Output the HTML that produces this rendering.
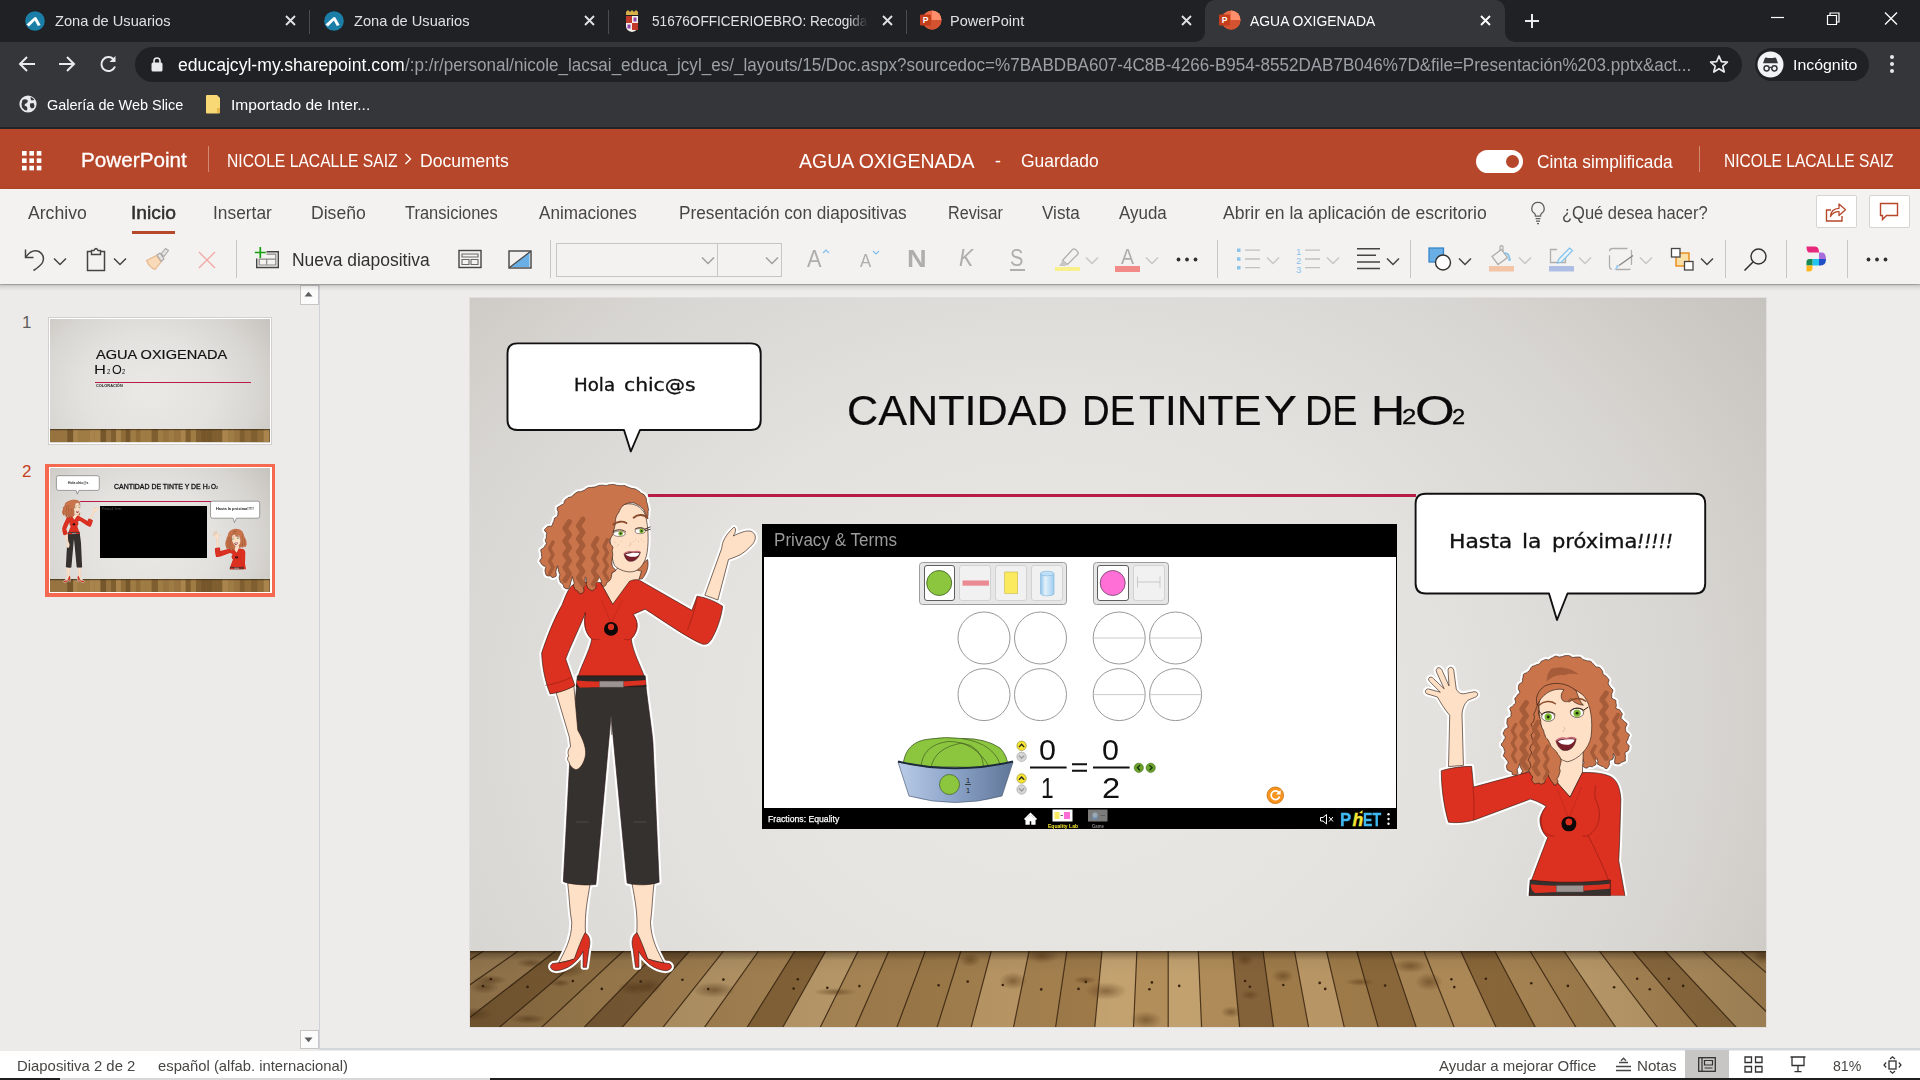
<!DOCTYPE html>
<html lang="es"><head><meta charset="utf-8"><title>AGUA OXIGENADA</title>
<style>
html,body{margin:0;padding:0;}
body{width:1920px;height:1080px;overflow:hidden;position:relative;background:#edebe9;font-family:"Liberation Sans",sans-serif;}
.a{position:absolute;}
.t{position:absolute;white-space:pre;transform-origin:0 50%;}
svg{position:absolute;overflow:visible;}

</style></head>
<body>
<div class="a" style="left:0;top:0;width:1920px;height:42px;background:#202124"></div>
<div class="a" style="left:0;top:42px;width:1920px;height:86px;background:#35363a"></div>
<div class="a" style="left:0;top:127.300px;width:1920px;height:1.700px;background:#222326"></div>
<div class="a" style="left:1205px;top:0;width:300px;height:42px;background:#35363a;border-radius:10px 10px 0 0"></div>
<svg style="left:1195px;top:32px" width="10" height="10"><path d="M10 0 V10 H0 A10 10 0 0 0 10 0Z" fill="#35363a"/></svg>
<svg style="left:1505px;top:32px" width="10" height="10"><path d="M0 0 V10 H10 A10 10 0 0 1 0 0Z" fill="#35363a"/></svg>
<div class="a" style="left:309px;top:10px;width:1px;height:24px;background:#4a4c50"></div>
<div class="a" style="left:608px;top:10px;width:1px;height:24px;background:#4a4c50"></div>
<div class="a" style="left:906px;top:10px;width:1px;height:24px;background:#4a4c50"></div>
<svg style="left:24.5px;top:11px" width="20" height="20" viewBox="0 0 20 20"><circle cx="10" cy="10" r="9.800" fill="#1b7ea6"/><path d="M1.5 13.5 L9.5 6.2 Q10.5 5.4 11.4 6.6 L15.6 14 L12.8 15 L9.8 9.6 L4 15.6Z" fill="#fff"/></svg>
<svg style="left:323.5px;top:11px" width="20" height="20" viewBox="0 0 20 20"><circle cx="10" cy="10" r="9.800" fill="#1b7ea6"/><path d="M1.5 13.5 L9.5 6.2 Q10.5 5.4 11.4 6.6 L15.6 14 L12.8 15 L9.8 9.6 L4 15.6Z" fill="#fff"/></svg>
<svg style="left:624px;top:10px" width="16" height="22" viewBox="0 0 16 22"><path d="M2 2 L4 0 L6 2 L8 0 L10 2 L12 0 L14 2 V5 H2Z" fill="#d8b04a"/><path d="M2 6 H14 V16 Q14 21 8 22 Q2 21 2 16Z" fill="#f4f0ea"/><rect x="2" y="6" width="6" height="7" fill="#c0392b"/><rect x="8" y="13" width="6" height="7" fill="#c0392b"/><rect x="9.5" y="7.5" width="3" height="4" fill="#8e44ad"/><rect x="3.5" y="14.5" width="3" height="4" fill="#8e44ad"/></svg>
<svg style="left:920px;top:10px" width="22" height="20" viewBox="0 0 22 20"><circle cx="12" cy="10" r="9.5" fill="#ed6c47"/><path d="M12 .5 A9.5 9.5 0 0 1 21.5 10 H12Z" fill="#ff8f6b"/><path d="M2.5 10 H21.5 A9.5 9.5 0 0 1 3.8 14.8Z" fill="#d35230"/><rect x="0" y="4.5" width="11" height="11" rx="1" fill="#c43e1c"/><text x="5.5" y="13.2" font-family="Liberation Sans,sans-serif" font-size="8.5" font-weight="700" fill="#fff" text-anchor="middle">P</text></svg>
<svg style="left:1219px;top:10px" width="22" height="20" viewBox="0 0 22 20"><circle cx="12" cy="10" r="9.5" fill="#ed6c47"/><path d="M12 .5 A9.5 9.5 0 0 1 21.5 10 H12Z" fill="#ff8f6b"/><path d="M2.5 10 H21.5 A9.5 9.5 0 0 1 3.8 14.8Z" fill="#d35230"/><rect x="0" y="4.5" width="11" height="11" rx="1" fill="#c43e1c"/><text x="5.5" y="13.2" font-family="Liberation Sans,sans-serif" font-size="8.5" font-weight="700" fill="#fff" text-anchor="middle">P</text></svg>
<span class="t" style="left:55.00px;top:10.5px;line-height:20px;font-size:15px;color:#dee1e6;transform:scaleX(0.9754);">Zona de Usuarios</span>
<span class="t" style="left:354.00px;top:10.5px;line-height:20px;font-size:15px;color:#dee1e6;transform:scaleX(0.9754);">Zona de Usuarios</span>
<span class="t" style="left:652.00px;top:10.5px;line-height:20px;font-size:15px;color:#dee1e6;transform:scaleX(0.9066);-webkit-mask-image:linear-gradient(90deg,#000 91%,transparent 100%);mask-image:linear-gradient(90deg,#000 91%,transparent 100%);">51676OFFICERIOEBRO: Recogida</span>
<span class="t" style="left:950.03px;top:10.5px;line-height:20px;font-size:15px;color:#dee1e6;transform:scaleX(0.9668);">PowerPoint</span>
<span class="t" style="left:1250.00px;top:10.5px;line-height:20px;font-size:15px;color:#fff;transform:scaleX(0.9274);">AGUA OXIGENADA</span>
<svg style="left:284.5px;top:15px" width="11" height="11" viewBox="0 0 11 11"><path d="M1 1 L10 10 M10 1 L1 10" stroke="#dee1e6" stroke-width="1.9" fill="none"/></svg>
<svg style="left:583.5px;top:15px" width="11" height="11" viewBox="0 0 11 11"><path d="M1 1 L10 10 M10 1 L1 10" stroke="#dee1e6" stroke-width="1.9" fill="none"/></svg>
<svg style="left:881.5px;top:15px" width="11" height="11" viewBox="0 0 11 11"><path d="M1 1 L10 10 M10 1 L1 10" stroke="#dee1e6" stroke-width="1.9" fill="none"/></svg>
<svg style="left:1180.5px;top:15px" width="11" height="11" viewBox="0 0 11 11"><path d="M1 1 L10 10 M10 1 L1 10" stroke="#dee1e6" stroke-width="1.9" fill="none"/></svg>
<svg style="left:1479.5px;top:15px" width="11" height="11" viewBox="0 0 11 11"><path d="M1 1 L10 10 M10 1 L1 10" stroke="#fff" stroke-width="1.9" fill="none"/></svg>
<svg style="left:1524px;top:13px" width="16" height="16" viewBox="0 0 16 16"><path d="M8 1 V15 M1 8 H15" stroke="#e8eaed" stroke-width="2" fill="none"/></svg>
<svg style="left:1770px;top:10px" width="140" height="18" viewBox="0 0 140 18"><path d="M1 7.5 H14" stroke="#fff" stroke-width="1.2"/><path d="M57.5 5.5 H66.5 V14.5 H57.5Z M60 5.5 V3 H69 V12 H66.5" stroke="#fff" stroke-width="1.2" fill="none"/><path d="M115 2.5 L127 14.5 M127 2.5 L115 14.5" stroke="#fff" stroke-width="1.3" fill="none"/></svg>
<svg style="left:17px;top:54px" width="104" height="20" viewBox="0 0 104 20"><path d="M18 10 H3 M10 3 L3 10 L10 17" stroke="#e8eaed" stroke-width="2" fill="none"/><path d="M42 10 H57 M50 3 L57 10 L50 17" stroke="#e8eaed" stroke-width="2" fill="none"/><path d="M96.5 5.2 A7 7 0 1 0 98 12.5" stroke="#e8eaed" stroke-width="2" fill="none"/><path d="M98.5 2 V8 H92.5Z" fill="#e8eaed"/></svg>
<div class="a" style="left:135px;top:47px;width:1607px;height:35px;border-radius:18px;background:#202124"></div>
<svg style="left:151px;top:57px" width="12" height="15" viewBox="0 0 12 15"><rect x="0.5" y="5.5" width="11" height="9" rx="1.5" fill="#e8eaed"/><path d="M3 6 V4 A3 3 0 0 1 9 4 V6" stroke="#e8eaed" stroke-width="1.6" fill="none"/></svg>
<span class="t" style="left:178.00px;top:54.2px;line-height:23px;font-size:17.5px;color:#fff;transform:scaleX(1.0056);">educajcyl-my.sharepoint.com</span>
<span class="t" style="left:404.50px;top:54.2px;line-height:23px;font-size:17.5px;color:#9aa0a6;transform:scaleX(0.9744);">/:p:/r/personal/nicole_lacsai_educa_jcyl_es/_layouts/15/Doc.aspx?sourcedoc=%7BABDBA607-4C8B-4266-B954-8552DAB7B046%7D&amp;file=Presentación%203.pptx&amp;act...</span>
<svg style="left:1709px;top:54px" width="20" height="20" viewBox="0 0 20 20"><path d="M10 2 L12.4 7.6 L18.4 8.1 L13.8 12.1 L15.2 18 L10 14.8 L4.8 18 L6.2 12.1 L1.6 8.1 L7.6 7.6Z" stroke="#e8eaed" stroke-width="1.7" fill="none" stroke-linejoin="round"/></svg>
<div class="a" style="left:1755px;top:48px;width:114px;height:33px;border-radius:17px;background:#202124"></div>
<svg style="left:1757px;top:51px" width="27" height="27" viewBox="0 0 27 27"><circle cx="13.5" cy="13.5" r="13" fill="#f1f3f4"/><path d="M6 12.2 H21 L19.2 7.2 Q18.8 6.2 17.8 6.5 L16 7 H11 L9.2 6.5 Q8.2 6.2 7.8 7.2Z" fill="#35363a"/><circle cx="9.6" cy="17.3" r="2.6" stroke="#35363a" stroke-width="1.5" fill="none"/><circle cx="17.4" cy="17.3" r="2.6" stroke="#35363a" stroke-width="1.5" fill="none"/><path d="M12 16.8 Q13.5 15.8 15 16.8" stroke="#35363a" stroke-width="1.3" fill="none"/></svg>
<span class="t" style="left:1792.94px;top:54.5px;line-height:20px;font-size:15px;color:#fff;transform:scaleX(1.0582);">Incógnito</span>
<svg style="left:1889px;top:54px" width="6" height="20" viewBox="0 0 6 20"><circle cx="3" cy="3" r="2" fill="#e8eaed"/><circle cx="3" cy="10" r="2" fill="#e8eaed"/><circle cx="3" cy="17" r="2" fill="#e8eaed"/></svg>
<svg style="left:19px;top:95px" width="18" height="18" viewBox="0 0 18 18"><circle cx="9" cy="9" r="8.6" fill="#e8eaed"/><path d="M3.5 5 Q6 3.5 8.5 5 Q9.5 7 7.5 8.2 Q5.5 8.6 5.5 10.5 L7.6 11.5 Q9 12.8 8 15.4 Q5 15.5 3 12.5 Q1.8 9 3.5 5Z M11 8.4 L14.6 8 Q16.2 10.5 14.6 13 L12.6 13.4 Q10.6 12.4 11 10.6Z M11.8 2 Q14.2 2.8 15.4 5 L12.5 5.4 Q11 4 11.8 2Z" fill="#35363a"/></svg>
<span class="t" style="left:47.00px;top:94.5px;line-height:20px;font-size:15px;color:#fff;transform:scaleX(0.9637);">Galería de Web Slice</span>
<svg style="left:205px;top:95px" width="16" height="19" viewBox="0 0 16 19"><path d="M1 1 Q1 0 2 0 H12 L15 3 V17 Q15 18.5 13.5 18.5 H2 Q1 18.5 1 17.5Z" fill="#f8d775"/><rect x="12" y="13" width="3" height="5" fill="#e8b94a"/></svg>
<span class="t" style="left:230.96px;top:94.5px;line-height:20px;font-size:15px;color:#fff;transform:scaleX(1.0373);">Importado de Inter...</span>
<div class="a" style="left:0;top:129px;width:1920px;height:60px;background:#b7472a"></div>
<svg style="left:21.5px;top:150.5px" width="20" height="20" viewBox="0 0 19 19"><rect x="0" y="0" width="4.4" height="4.4" fill="#fff"/><rect x="0" y="7" width="4.4" height="4.4" fill="#fff"/><rect x="0" y="14" width="4.4" height="4.4" fill="#fff"/><rect x="7" y="0" width="4.4" height="4.4" fill="#fff"/><rect x="7" y="7" width="4.4" height="4.4" fill="#fff"/><rect x="7" y="14" width="4.4" height="4.4" fill="#fff"/><rect x="14" y="0" width="4.4" height="4.4" fill="#fff"/><rect x="14" y="7" width="4.4" height="4.4" fill="#fff"/><rect x="14" y="14" width="4.4" height="4.4" fill="#fff"/></svg>
<span class="t" style="left:81.01px;top:145.5px;line-height:27px;font-size:21px;color:#fff;transform:scaleX(0.9854);-webkit-text-stroke:0.3px #fff;">PowerPoint</span>
<div class="a" style="left:208px;top:146px;width:1px;height:26px;background:#d28a74"></div>
<span class="t" style="left:227.10px;top:149.5px;line-height:23px;font-size:17.5px;color:#fff;transform:scaleX(0.8950);">NICOLE LACALLE SAIZ</span>
<svg style="left:404px;top:153px" width="8" height="12" viewBox="0 0 8 12"><path d="M1.5 1 L6.5 6 L1.5 11" stroke="#fff" stroke-width="1.4" fill="none"/></svg>
<span class="t" style="left:420.00px;top:149.5px;line-height:23px;font-size:17.5px;color:#fff;transform:scaleX(1.0028);">Documents</span>
<span class="t" style="left:799.00px;top:146.5px;line-height:27px;font-size:20.5px;color:#fff;transform:scaleX(0.9516);">AGUA OXIGENADA</span>
<span class="t" style="left:995.00px;top:149.5px;line-height:23px;font-size:17.5px;color:#fff;">-</span>
<span class="t" style="left:1021.00px;top:149.5px;line-height:23px;font-size:17.5px;color:#fff;transform:scaleX(0.9987);">Guardado</span>
<div class="a" style="left:1476px;top:149.5px;width:47px;height:23px;border-radius:12px;background:#fff"></div>
<div class="a" style="left:1506px;top:154.5px;width:13px;height:13px;border-radius:7px;background:#b7472a"></div>
<span class="t" style="left:1537.00px;top:150.5px;line-height:23px;font-size:17.5px;color:#fff;transform:scaleX(0.9898);">Cinta simplificada</span>
<div class="a" style="left:1699px;top:146px;width:1px;height:26px;background:#d28a74"></div>
<span class="t" style="left:1724.11px;top:149.5px;line-height:23px;font-size:17.5px;color:#fff;transform:scaleX(0.8898);">NICOLE LACALLE SAIZ</span>
<div class="a" style="left:0;top:189px;width:1920px;height:95px;background:#f3f2f1;box-shadow:0 2px 5px rgba(0,0,0,.25)"></div>
<span class="t" style="left:28.00px;top:202px;line-height:23px;font-size:17.5px;color:#484644;transform:scaleX(1.0066);">Archivo</span>
<span class="t" style="left:213.01px;top:202px;line-height:23px;font-size:17.5px;color:#484644;transform:scaleX(0.9915);">Insertar</span>
<span class="t" style="left:311.00px;top:202px;line-height:23px;font-size:17.5px;color:#484644;transform:scaleX(1.0049);">Diseño</span>
<span class="t" style="left:405.00px;top:202px;line-height:23px;font-size:17.5px;color:#484644;transform:scaleX(0.9412);">Transiciones</span>
<span class="t" style="left:539.00px;top:202px;line-height:23px;font-size:17.5px;color:#484644;transform:scaleX(0.9757);">Animaciones</span>
<span class="t" style="left:679.02px;top:202px;line-height:23px;font-size:17.5px;color:#484644;transform:scaleX(0.9836);">Presentación con diapositivas</span>
<span class="t" style="left:948.08px;top:202px;line-height:23px;font-size:17.5px;color:#484644;transform:scaleX(0.9232);">Revisar</span>
<span class="t" style="left:1042.00px;top:202px;line-height:23px;font-size:17.5px;color:#484644;transform:scaleX(0.9780);">Vista</span>
<span class="t" style="left:1119.00px;top:202px;line-height:23px;font-size:17.5px;color:#484644;transform:scaleX(0.9683);">Ayuda</span>
<span class="t" style="left:1223.00px;top:202px;line-height:23px;font-size:17.5px;color:#484644;transform:scaleX(1.0042);">Abrir en la aplicación de escritorio</span>
<span class="t" style="left:1562.06px;top:202px;line-height:23px;font-size:17.5px;color:#484644;transform:scaleX(0.9419);">¿Qué desea hacer?</span>
<span class="t" style="left:130.90px;top:202px;line-height:23px;font-size:17.5px;color:#323130;transform:scaleX(1.0992);-webkit-text-stroke:0.5px #323130;">Inicio</span>
<div class="a" style="left:132px;top:230.5px;width:43px;height:3.5px;background:#b7472a"></div>
<svg style="left:1530px;top:201px" width="16" height="24" viewBox="0 0 16 24"><path d="M8 1.5 A6 6 0 0 1 11.3 12.6 Q10.6 13.4 10.6 15.2 H5.4 Q5.4 13.4 4.7 12.6 A6 6 0 0 1 8 1.5Z M5.6 17.6 H10.4 M6 20.2 H10 M7 22.6 H9" stroke="#605e5c" stroke-width="1.25" fill="none"/></svg>
<div class="a" style="left:1815.5px;top:194.5px;width:41px;height:33.5px;background:#fff;border:1px solid #d6d4d2;border-radius:2px;box-sizing:border-box"></div>
<div class="a" style="left:1868.5px;top:194.5px;width:41px;height:33.5px;background:#fff;border:1px solid #d6d4d2;border-radius:2px;box-sizing:border-box"></div>
<svg style="left:1825px;top:202px" width="22" height="20" viewBox="0 0 22 20"><path d="M6 8 H1.5 V19 H17 V14" stroke="#b7472a" stroke-width="1.4" fill="none"/><path d="M5.5 14.5 Q6 6.5 14 6.3 V2 L20.5 7.8 L14 13.6 V9.6 Q8.6 9.2 5.5 14.5Z" stroke="#b7472a" stroke-width="1.3" fill="none" stroke-linejoin="round"/></svg>
<svg style="left:1879px;top:202px" width="20" height="19" viewBox="0 0 20 19"><path d="M1.5 1.5 H18.5 V13.5 H7.5 L3.5 17.5 V13.5 H1.5Z" stroke="#b7472a" stroke-width="1.4" fill="none"/></svg>
<svg style="left:23px;top:247px" width="24" height="26" viewBox="0 0 24 26"><path d="M2.5 2.5 V10.5 H10.5" stroke="#444" stroke-width="1.5" fill="none"/><path d="M3 10 Q8.5 1.5 16 4.5 Q22.5 8.5 19.5 15.5 Q17.5 19 10.5 23.5" stroke="#444" stroke-width="1.5" fill="none"/></svg>
<svg style="left:53px;top:256.5px" width="14" height="9" viewBox="0 0 14 9"><path d="M1 1.5 L7 7.5 L13 1.5" stroke="#444" stroke-width="1.5" fill="none"/></svg>
<svg style="left:86px;top:247px" width="20" height="25" viewBox="0 0 20 25"><path d="M5.5 4.5 H1.5 V23.5 H18.5 V4.5 H14.5" stroke="#444" stroke-width="1.5" fill="none"/><path d="M5.5 7.5 V3.5 H8 Q10 -0.5 12 3.5 H14.5 V7.5Z" stroke="#444" stroke-width="1.4" fill="none"/></svg>
<svg style="left:113px;top:256.5px" width="14" height="9" viewBox="0 0 14 9"><path d="M1 1.5 L7 7.5 L13 1.5" stroke="#444" stroke-width="1.5" fill="none"/></svg>
<svg style="left:145px;top:247px" width="26" height="24" viewBox="0 0 26 24"><path d="M1.5 13.5 L11.5 8.5 L16 15 L10 22.5 Q4 20 1.5 13.5Z" fill="#f8d9b8" stroke="#e5b98e" stroke-width="1.2"/><path d="M12 8 L15 6 L19 12 L16.4 14.5Z M16 7 L20.5 1.5 L23.5 3.5 L19 9.5Z" fill="#e6e4e2" stroke="#aaa8a6" stroke-width="1.1"/></svg>
<svg style="left:198px;top:251px" width="18" height="18" viewBox="0 0 18 18"><path d="M1 1 L17 17 M17 1 L1 17" stroke="#f2a9a6" stroke-width="1.4" fill="none"/></svg>
<div class="a" style="left:236px;top:240px;width:1px;height:38px;background:#c8c6c4"></div>
<svg style="left:254px;top:246px" width="26" height="24" viewBox="0 0 26 24"><path d="M12.500 5.700 H24.300 V21.500 H2.700 V12.500" stroke="#444" stroke-width="1.400" fill="none"/><path d="M12.500 8.200 H21.800 V19 H5.200 V12.500 M5.200 13.200 H21.800 M12.700 13.200 V19" stroke="#8a8886" stroke-width="1.200" fill="none"/><path d="M6.300 1 V12 M0.800 6.500 H11.800" stroke="#13a10e" stroke-width="1.700"/></svg>
<span class="t" style="left:292.00px;top:249px;line-height:23px;font-size:17.5px;color:#323130;transform:scaleX(0.9971);">Nueva diapositiva</span>
<svg style="left:458px;top:249px" width="24" height="20" viewBox="0 0 24 20"><rect x="1" y="1.5" width="22" height="17" stroke="#444" stroke-width="1.4" fill="none"/><path d="M4 5 H20 V8 H4Z M4 10.5 H11 V15.5 H4Z M13 10.5 H20 V15.500 H13Z" stroke="#6b6967" stroke-width="1.1" fill="none"/></svg>
<svg style="left:508px;top:250px" width="24" height="19" viewBox="0 0 24 19"><path d="M21.500 2 V17 H3Z" fill="#69afe5"/><rect x="1" y="1" width="22" height="17" stroke="#444" stroke-width="1.4" fill="none"/><path d="M1.500 17.500 L22.500 1.500" stroke="#444" stroke-width="1.2"/></svg>
<div class="a" style="left:550px;top:240px;width:1px;height:38px;background:#c8c6c4"></div>
<div class="a" style="left:556px;top:242.5px;width:226px;height:34px;border:1px solid #c8c6c4;box-sizing:border-box;background:#f3f2f1"></div>
<div class="a" style="left:717px;top:242.5px;width:1px;height:34px;background:#c8c6c4"></div>
<svg style="left:700.5px;top:255.5px" width="14" height="9" viewBox="0 0 14 9"><path d="M1 1.5 L7 7.5 L13 1.5" stroke="#a19f9d" stroke-width="1.5" fill="none"/></svg>
<svg style="left:764.5px;top:255.5px" width="14" height="9" viewBox="0 0 14 9"><path d="M1 1.5 L7 7.5 L13 1.5" stroke="#a19f9d" stroke-width="1.5" fill="none"/></svg>
<span class="t" style="left:807.00px;top:243.2px;line-height:31px;font-size:24px;color:#b0aeac;transform:scaleX(0.9062);">A</span>
<svg style="left:822px;top:249px" width="8" height="5" viewBox="0 0 8 5"><path d="M1 4 L4 1 L7 4" stroke="#7fc0ea" stroke-width="1.2" fill="none"/></svg>
<span class="t" style="left:860.00px;top:248.3px;line-height:25px;font-size:19px;color:#b0aeac;transform:scaleX(0.8846);">A</span>
<svg style="left:872px;top:249.500px" width="8" height="5" viewBox="0 0 8 5"><path d="M1 1 L4 4 L7 1" stroke="#7fc0ea" stroke-width="1.2" fill="none"/></svg>
<span class="t" style="left:907.37px;top:243px;line-height:31px;font-size:24px;color:#b0aeac;font-weight:700;transform:scaleX(1.1333);">N</span>
<span class="t" style="left:959.00px;top:243px;line-height:31px;font-size:23.5px;color:#b0aeac;transform:scaleX(0.9118);font-style:italic;">K</span>
<span class="t" style="left:1010.14px;top:242.5px;line-height:31px;font-size:23.5px;color:#b0aeac;transform:scaleX(0.8571);">S</span>
<div class="a" style="left:1010px;top:269px;width:15px;height:1.500px;background:#b0aeac"></div>
<svg style="left:1054px;top:246px" width="28" height="28" viewBox="0 0 28 28"><rect x="1" y="21" width="25" height="4" fill="#f8f18b"/><path d="M8.500 14.500 L18.500 3.500 Q20 2.200 21.500 3.500 L23.600 5.600 Q24.800 7 23.500 8.500 L13.500 18.500Z" stroke="#b0aeac" stroke-width="1.3" fill="none"/><path d="M8.500 14.500 L13.500 18.500 L11 20 H5Z" fill="#c8c6c4"/></svg>
<svg style="left:1085px;top:256px" width="14" height="9" viewBox="0 0 14 9"><path d="M1 1.5 L7 7.5 L13 1.5" stroke="#c8c6c4" stroke-width="1.5" fill="none"/></svg>
<span class="t" style="left:1121.00px;top:241.8px;line-height:29px;font-size:22.5px;color:#b0aeac;transform:scaleX(0.8667);">A</span>
<div class="a" style="left:1115px;top:266px;width:25px;height:5.500px;background:#f28b88"></div>
<svg style="left:1145px;top:256px" width="14" height="9" viewBox="0 0 14 9"><path d="M1 1.5 L7 7.5 L13 1.5" stroke="#c8c6c4" stroke-width="1.5" fill="none"/></svg>
<svg style="left:1176px;top:256.500px" width="22" height="5" viewBox="0 0 22 5"><circle cx="2.500" cy="2.500" r="1.900" fill="#323130"/><circle cx="11" cy="2.500" r="1.900" fill="#323130"/><circle cx="19.500" cy="2.500" r="1.900" fill="#323130"/></svg>
<div class="a" style="left:1217px;top:240px;width:1px;height:38px;background:#c8c6c4"></div>
<svg style="left:1236px;top:247px" width="26" height="24" viewBox="0 0 26 24"><path d="M1 1.500 H4.500 V5 H1Z M1 10.200 H4.500 V13.700 H1Z M1 19 H4.500 V22.500 H1Z" fill="#8cc4ec"/><path d="M9 3.200 H24 M9 12 H24 M9 20.700 H24" stroke="#c2c0be" stroke-width="1.300"/></svg>
<svg style="left:1266px;top:256px" width="14" height="9" viewBox="0 0 14 9"><path d="M1 1.5 L7 7.5 L13 1.5" stroke="#c8c6c4" stroke-width="1.5" fill="none"/></svg>
<svg style="left:1296px;top:245px" width="26" height="28" viewBox="0 0 26 28"><text x="0" y="9.500" font-family="Liberation Sans,sans-serif" font-size="9.500" fill="#8cc4ec">1</text><text x="0" y="18.500" font-family="Liberation Sans,sans-serif" font-size="9.500" fill="#8cc4ec">2</text><text x="0" y="27.500" font-family="Liberation Sans,sans-serif" font-size="9.500" fill="#8cc4ec">3</text><path d="M9 5.200 H24 M9 14 H24 M9 22.700 H24" stroke="#c2c0be" stroke-width="1.300"/></svg>
<svg style="left:1326px;top:256px" width="14" height="9" viewBox="0 0 14 9"><path d="M1 1.5 L7 7.5 L13 1.5" stroke="#c8c6c4" stroke-width="1.5" fill="none"/></svg>
<svg style="left:1356px;top:247px" width="26" height="24" viewBox="0 0 26 24"><path d="M1 1.800 H24 M1 8.300 H20 M1 14.900 H24 M1 21.400 H24" stroke="#444" stroke-width="1.500"/></svg>
<svg style="left:1385.5px;top:256.5px" width="14" height="9" viewBox="0 0 14 9"><path d="M1 1.5 L7 7.5 L13 1.5" stroke="#444" stroke-width="1.5" fill="none"/></svg>
<div class="a" style="left:1409.5px;top:240px;width:1px;height:38px;background:#c8c6c4"></div>
<svg style="left:1428px;top:247px" width="26" height="26" viewBox="0 0 26 26"><rect x="1" y="1" width="14.500" height="14" fill="#69afe5" stroke="#2f7fc7" stroke-width="1.200"/><circle cx="15" cy="15.500" r="7.500" fill="#fff" stroke="#323130" stroke-width="1.400"/></svg>
<svg style="left:1457.5px;top:256.5px" width="14" height="9" viewBox="0 0 14 9"><path d="M1 1.5 L7 7.5 L13 1.5" stroke="#444" stroke-width="1.5" fill="none"/></svg>
<svg style="left:1488px;top:245px" width="28" height="28" viewBox="0 0 28 28"><rect x="1" y="21" width="25" height="5.500" fill="#f3c4a5"/><path d="M4 11.500 L13.500 4.500 L19.500 12.500 L10 19.500Z" stroke="#b0aeac" stroke-width="1.300" fill="none"/><path d="M12 6 V1.500 Q13.500 0 15 1.500 V6" stroke="#b0aeac" stroke-width="1.200" fill="none"/><path d="M16 8.500 Q20.500 7 21.500 13" stroke="#7fc0ea" stroke-width="1.500" fill="none"/><path d="M21.500 11 L23 15 Q21.500 17 20 15Z" fill="#7fc0ea"/></svg>
<svg style="left:1518px;top:256px" width="14" height="9" viewBox="0 0 14 9"><path d="M1 1.5 L7 7.5 L13 1.5" stroke="#c8c6c4" stroke-width="1.5" fill="none"/></svg>
<svg style="left:1548px;top:245px" width="28" height="28" viewBox="0 0 28 28"><rect x="1" y="21" width="25" height="5.500" fill="#aebde3"/><path d="M9 4.500 H2.500 V17.500 H17.500 V12" stroke="#b0aeac" stroke-width="1.300" fill="none"/><path d="M10.500 14.500 L21.500 3 L24.500 5.500 L13.500 17 L9.500 18Z" fill="#e9f3fb" stroke="#7fc0ea" stroke-width="1.200"/></svg>
<svg style="left:1578px;top:256px" width="14" height="9" viewBox="0 0 14 9"><path d="M1 1.5 L7 7.5 L13 1.5" stroke="#c8c6c4" stroke-width="1.5" fill="none"/></svg>
<svg style="left:1608px;top:247px" width="28" height="26" viewBox="0 0 28 26"><rect x="1.500" y="1.500" width="22" height="21" rx="3" stroke="#b0aeac" stroke-width="1.300" fill="none" stroke-dasharray="15 4"/><path d="M11 19.500 Q8.500 23.500 5.500 23 Q8 22 8.500 18 Q10.500 17 11 19.500Z" fill="#9fcdef"/><path d="M11 18.500 L25 8.500" stroke="#8a8886" stroke-width="1.500"/></svg>
<svg style="left:1638.5px;top:256px" width="14" height="9" viewBox="0 0 14 9"><path d="M1 1.5 L7 7.5 L13 1.5" stroke="#c8c6c4" stroke-width="1.5" fill="none"/></svg>
<svg style="left:1670px;top:247px" width="26" height="26" viewBox="0 0 26 26"><rect x="6" y="6" width="13" height="13" fill="#fbe0a6" stroke="#e6820a" stroke-width="1.300"/><rect x="1.500" y="1.500" width="8.500" height="8.500" fill="#fff" stroke="#484644" stroke-width="1.300"/><rect x="14.500" y="14.500" width="8.500" height="8.500" fill="#fff" stroke="#484644" stroke-width="1.300"/></svg>
<svg style="left:1699.5px;top:256.5px" width="14" height="9" viewBox="0 0 14 9"><path d="M1 1.5 L7 7.5 L13 1.5" stroke="#444" stroke-width="1.5" fill="none"/></svg>
<div class="a" style="left:1724.5px;top:240px;width:1px;height:38px;background:#c8c6c4"></div>
<svg style="left:1743px;top:247px" width="26" height="26" viewBox="0 0 26 26"><circle cx="15.500" cy="9.500" r="7.500" stroke="#323130" stroke-width="1.400" fill="none"/><path d="M10 15 L1.500 23.500" stroke="#323130" stroke-width="1.600"/></svg>
<div class="a" style="left:1785.5px;top:240px;width:1px;height:38px;background:#c8c6c4"></div>
<svg style="left:1806px;top:246px" width="22" height="27" viewBox="0 0 22 27"><path d="M0.500 0.500 H9 Q13 0.500 13 6.500 H3.500 Q0.500 6.500 0.500 0.500Z" fill="#e8287b"/><path d="M13 6.500 H16 Q20 7 20 13 H13Z" fill="#a86edd"/><path d="M13 13 H20 Q20 19.500 14.500 19.500 H13Z" fill="#1f4fc9"/><rect x="6.500" y="13" width="6.500" height="6.500" fill="#22c5f0"/><path d="M0.500 19.500 V16 Q0.500 13 3.500 13 H6.500 V19.500Z" fill="#178a54"/><path d="M0.500 19.500 H6.500 V22 Q6.500 25.500 3 25.500 H0.500Z" fill="#ffb71b"/></svg>
<div class="a" style="left:1846.5px;top:240px;width:1px;height:38px;background:#c8c6c4"></div>
<svg style="left:1865.500px;top:256.500px" width="22" height="5" viewBox="0 0 22 5"><circle cx="2.500" cy="2.500" r="1.900" fill="#323130"/><circle cx="11" cy="2.500" r="1.900" fill="#323130"/><circle cx="19.500" cy="2.500" r="1.900" fill="#323130"/></svg>
<div class="a" style="left:0;top:285px;width:319px;height:764px;background:#edebe9"></div>
<div class="a" style="left:318.700px;top:285px;width:1px;height:764px;background:#cfd3d9"></div>
<div class="a" style="left:319.700px;top:285px;width:1601px;height:764px;background:#edecea"></div>
<div class="a" style="left:299.500px;top:285.300px;width:19.400px;height:19.400px;background:#fbfbfb;border:1px solid #c8c6c4;box-sizing:border-box"></div>
<svg style="left:304px;top:291px" width="9" height="6" viewBox="0 0 9 6"><path d="M0.500 5.500 L4.500 0.800 L8.500 5.500Z" fill="#605e5c"/></svg>
<div class="a" style="left:299.500px;top:1029.500px;width:19.400px;height:19.400px;background:#fbfbfb;border:1px solid #c8c6c4;box-sizing:border-box"></div>
<svg style="left:304px;top:1037px" width="9" height="6" viewBox="0 0 9 6"><path d="M0.500 0.500 L4.500 5.200 L8.500 0.500Z" fill="#605e5c"/></svg>
<div class="a" style="left:0;top:284px;width:1920px;height:7px;background:linear-gradient(rgba(0,0,0,.2),rgba(0,0,0,.07) 45%,rgba(0,0,0,0))"></div>
<span class="t" style="left:22.00px;top:312px;line-height:22px;font-size:17px;color:#605e5c;">1</span>
<span class="t" style="left:22.00px;top:461px;line-height:22px;font-size:17px;color:#c43e1c;">2</span>
<div class="a" style="left:319px;top:1048px;width:1601px;height:2px;background:#d3d8de"></div>
<div class="a" style="left:0;top:1050.500px;width:1920px;height:28px;background:#fff"></div>
<div class="a" style="left:0;top:1078px;width:1920px;height:2px;background:#1f1f1f"></div>
<div class="a" style="left:60px;top:1078px;width:430px;height:2px;background:#d8d8d8"></div>
<span class="t" style="left:17.01px;top:1055.5px;line-height:20px;font-size:15px;color:#484644;transform:scaleX(0.9924);">Diapositiva 2 de 2</span>
<span class="t" style="left:158.00px;top:1055.5px;line-height:20px;font-size:15px;color:#484644;transform:scaleX(0.9864);">español (alfab. internacional)</span>
<span class="t" style="left:1439.00px;top:1055.5px;line-height:20px;font-size:15px;color:#484644;transform:scaleX(0.9968);">Ayudar a mejorar Office</span>
<svg style="left:1615px;top:1057px" width="17" height="15" viewBox="0 0 17 15"><path d="M1 13.500 H16 M1 9.500 H16 M4 5.500 H13 M6 3.800 L8.500 1.200 L11 3.800" stroke="#484644" stroke-width="1.300" fill="none"/></svg>
<span class="t" style="left:1636.99px;top:1055.5px;line-height:20px;font-size:15px;color:#484644;transform:scaleX(1.0084);">Notas</span>
<div class="a" style="left:1685px;top:1050px;width:44px;height:28px;background:#c8c6c4"></div>
<svg style="left:1698px;top:1057px" width="18" height="15" viewBox="0 0 18 15"><rect x="0.700" y="0.700" width="16.600" height="13.600" stroke="#323130" stroke-width="1.300" fill="none"/><path d="M4 0.700 V14.300 M6.500 3.500 H14.500 V8 H6.500Z M6.500 11 H14.500" stroke="#323130" stroke-width="1.200" fill="none"/></svg>
<svg style="left:1744px;top:1056px" width="19" height="17" viewBox="0 0 19 17"><path d="M1 1 H7.500 V6.500 H1Z M11.500 1 H18 V6.500 H11.500Z M1 10.500 H7.500 V16 H1Z M11.500 10.500 H18 V16 H11.500Z" stroke="#323130" stroke-width="1.300" fill="none"/></svg>
<svg style="left:1790px;top:1056px" width="16" height="17" viewBox="0 0 16 17"><path d="M0.500 1 H15.500 M2 1 V9.500 H14 V1 M8 9.500 V15.500 M4.500 15.700 H11.500" stroke="#323130" stroke-width="1.300" fill="none"/></svg>
<span class="t" style="left:1833.00px;top:1055.5px;line-height:20px;font-size:15px;color:#484644;transform:scaleX(0.9433);">81%</span>
<svg style="left:1883px;top:1056px" width="19" height="18" viewBox="0 0 19 18"><rect x="6" y="5" width="7" height="8" stroke="#323130" stroke-width="1.300" fill="none"/><path d="M7 3 L9.500 0.800 L12 3 M7 15 L9.500 17.200 L12 15 M3.200 6.500 L1 9 L3.200 11.500 M15.800 6.500 L18 9 L15.800 11.500" stroke="#323130" stroke-width="1.200" fill="none"/></svg>
<div class="a" style="left:470px;top:298px;width:1296px;height:729.3px;background:radial-gradient(ellipse 75% 110% at 45% 58%, #ebe9e6 0%, #e4e2df 40%, #d8d6d2 66%, #cecbc6 80%, #c5c3bd 91%, #bebcb5 100%);box-shadow:0 0 0 1px #e1dfdd"></div>
<svg style="left:470px;top:950.5px;overflow:hidden" width="1296" height="76.8" viewBox="0 0 1296 76.8"><defs><linearGradient id="fl" x1="0" x2="1" y1="0" y2="0"><stop offset="0" stop-color="#1a1208" stop-opacity=".27"/><stop offset=".1" stop-color="#1a1208" stop-opacity=".19"/><stop offset=".3" stop-color="#1a1208" stop-opacity=".08"/><stop offset=".5" stop-color="#1a1208" stop-opacity="0"/><stop offset=".8" stop-color="#1a1208" stop-opacity=".04"/><stop offset="1" stop-color="#1a1208" stop-opacity=".2"/></linearGradient><linearGradient id="ft" x1="0" x2="0" y1="0" y2="1"><stop offset="0" stop-color="#1a0f04" stop-opacity=".75"/><stop offset=".035" stop-color="#1a0f04" stop-opacity=".3"/><stop offset=".12" stop-color="#000" stop-opacity=".04"/><stop offset=".3" stop-color="#000" stop-opacity="0"/></linearGradient><radialGradient id="kn"><stop offset="0" stop-color="#5a3a18" stop-opacity=".55"/><stop offset="1" stop-color="#5a3a18" stop-opacity="0"/></radialGradient></defs><rect x="0" y="0" width="1296" height="76.8" fill="#a5814f"/><path d="M-20.0 0 L14.2 0 L-105.3 76.8 L-150.0 76.8Z" fill="#ab8755"/><path d="M13.6 0 L48.7 0 L-60.6 76.8 L-105.9 76.8Z" fill="#bb9866"/><path d="M48.1 0 L86.1 0 L-12.9 76.8 L-61.2 76.8Z" fill="#b4905e"/><path d="M85.5 0 L119.8 0 L29.4 76.8 L-13.5 76.8Z" fill="#8c693b"/><path d="M119.2 0 L153.9 0 L71.7 76.8 L28.8 76.8Z" fill="#a5814f"/><path d="M153.3 0 L188.6 0 L114.2 76.8 L71.1 76.8Z" fill="#b08c59"/><path d="M188.0 0 L220.1 0 L152.3 76.8 L113.6 76.8Z" fill="#85633a"/><path d="M219.5 0 L254.2 0 L193.2 76.8 L151.7 76.8Z" fill="#b08c59"/><path d="M253.6 0 L289.2 0 L234.7 76.8 L192.6 76.8Z" fill="#c3a270"/><path d="M288.6 0 L325.5 0 L277.4 76.8 L234.1 76.8Z" fill="#b08c59"/><path d="M324.9 0 L356.3 0 L313.1 76.8 L276.8 76.8Z" fill="#8c693b"/><path d="M355.7 0 L388.7 0 L350.6 76.8 L312.5 76.8Z" fill="#c3a270"/><path d="M388.1 0 L419.4 0 L385.8 76.8 L350.0 76.8Z" fill="#b08c59"/><path d="M418.8 0 L455.9 0 L427.3 76.8 L385.2 76.8Z" fill="#a5814f"/><path d="M455.3 0 L491.5 0 L467.5 76.8 L426.7 76.8Z" fill="#a07c4a"/><path d="M490.9 0 L521.8 0 L501.6 76.8 L466.9 76.8Z" fill="#a5814f"/><path d="M521.2 0 L559.7 0 L544.0 76.8 L501.0 76.8Z" fill="#bb9866"/><path d="M559.1 0 L597.4 0 L586.1 76.8 L543.4 76.8Z" fill="#a5814f"/><path d="M596.8 0 L632.6 0 L625.3 76.8 L585.5 76.8Z" fill="#9e7a49"/><path d="M632.0 0 L667.5 0 L664.1 76.8 L624.7 76.8Z" fill="#c3a270"/><path d="M666.9 0 L698.8 0 L698.8 76.8 L663.5 76.8Z" fill="#b28e5a"/><path d="M698.2 0 L728.9 0 L732.2 76.8 L698.2 76.8Z" fill="#c3a270"/><path d="M728.3 0 L763.1 0 L770.3 76.8 L731.6 76.8Z" fill="#b08c59"/><path d="M762.5 0 L793.6 0 L804.2 76.8 L769.7 76.8Z" fill="#85633a"/><path d="M793.0 0 L825.1 0 L839.3 76.8 L803.6 76.8Z" fill="#a07c4a"/><path d="M824.5 0 L857.1 0 L875.0 76.8 L838.7 76.8Z" fill="#bb9866"/><path d="M856.5 0 L887.3 0 L909.0 76.8 L874.4 76.8Z" fill="#a07c4a"/><path d="M886.7 0 L921.0 0 L947.0 76.8 L908.4 76.8Z" fill="#8c693b"/><path d="M920.4 0 L954.5 0 L985.0 76.8 L946.4 76.8Z" fill="#ab8755"/><path d="M953.9 0 L991.3 0 L1026.9 76.8 L984.4 76.8Z" fill="#b08c59"/><path d="M990.7 0 L1025.4 0 L1066.2 76.8 L1026.3 76.8Z" fill="#8c693b"/><path d="M1024.8 0 L1060.6 0 L1106.9 76.8 L1065.6 76.8Z" fill="#ab8755"/><path d="M1060.0 0 L1094.6 0 L1146.6 76.8 L1106.3 76.8Z" fill="#a5814f"/><path d="M1094.0 0 L1129.9 0 L1188.3 76.8 L1146.0 76.8Z" fill="#c3a270"/><path d="M1129.3 0 L1163.5 0 L1228.5 76.8 L1187.7 76.8Z" fill="#b08c59"/><path d="M1162.9 0 L1195.7 0 L1267.3 76.8 L1227.9 76.8Z" fill="#957243"/><path d="M1195.1 0 L1233.7 0 L1313.7 76.8 L1266.7 76.8Z" fill="#bb9866"/><path d="M1233.1 0 L1271.7 0 L1360.6 76.8 L1313.1 76.8Z" fill="#b28e5a"/><path d="M1271.1 0 L1308.4 0 L1406.7 76.8 L1360.0 76.8Z" fill="#b08c59"/><ellipse cx="14" cy="36" rx="15" ry="7" fill="url(#kn)"/><ellipse cx="244" cy="39" rx="22" ry="8" fill="url(#kn)"/><ellipse cx="543" cy="30" rx="14" ry="9" fill="url(#kn)"/><ellipse cx="1" cy="63" rx="22" ry="7" fill="url(#kn)"/><ellipse cx="1293" cy="5" rx="11" ry="9" fill="url(#kn)"/><ellipse cx="780" cy="44" rx="9" ry="5" fill="url(#kn)"/><ellipse cx="572" cy="5" rx="17" ry="8" fill="url(#kn)"/><ellipse cx="500" cy="9" rx="11" ry="7" fill="url(#kn)"/><ellipse cx="20" cy="29" rx="17" ry="5" fill="url(#kn)"/><ellipse cx="761" cy="61" rx="10" ry="6" fill="url(#kn)"/><ellipse cx="813" cy="25" rx="11" ry="7" fill="url(#kn)"/><ellipse cx="940" cy="15" rx="17" ry="7" fill="url(#kn)"/><ellipse cx="890" cy="31" rx="15" ry="4" fill="url(#kn)"/><ellipse cx="61" cy="12" rx="15" ry="5" fill="url(#kn)"/><ellipse cx="959" cy="31" rx="14" ry="9" fill="url(#kn)"/><ellipse cx="636" cy="40" rx="21" ry="9" fill="url(#kn)"/><ellipse cx="164" cy="37" rx="17" ry="7" fill="url(#kn)"/><ellipse cx="96" cy="19" rx="21" ry="8" fill="url(#kn)"/><ellipse cx="90" cy="32" rx="11" ry="4" fill="url(#kn)"/><ellipse cx="365" cy="41" rx="22" ry="4" fill="url(#kn)"/><ellipse cx="179" cy="35" rx="13" ry="8" fill="url(#kn)"/><ellipse cx="676" cy="69" rx="16" ry="9" fill="url(#kn)"/><ellipse cx="615" cy="29" rx="12" ry="4" fill="url(#kn)"/><ellipse cx="775" cy="9" rx="9" ry="6" fill="url(#kn)"/><ellipse cx="177" cy="9" rx="14" ry="6" fill="url(#kn)"/><ellipse cx="58" cy="68" rx="18" ry="5" fill="url(#kn)"/><path d="M-20.0 0 L-150.0 76.8M13.6 0 L-105.9 76.8M48.1 0 L-61.2 76.8M85.5 0 L-13.5 76.8M119.2 0 L28.8 76.8M153.3 0 L71.1 76.8M188.0 0 L113.6 76.8M219.5 0 L151.7 76.8M253.6 0 L192.6 76.8M288.6 0 L234.1 76.8M324.9 0 L276.8 76.8M355.7 0 L312.5 76.8M388.1 0 L350.0 76.8M418.8 0 L385.2 76.8M455.3 0 L426.7 76.8M490.9 0 L466.9 76.8M521.2 0 L501.0 76.8M559.1 0 L543.4 76.8M596.8 0 L585.5 76.8M632.0 0 L624.7 76.8M666.9 0 L663.5 76.8M698.2 0 L698.2 76.8M728.3 0 L731.6 76.8M762.5 0 L769.7 76.8M793.0 0 L803.6 76.8M824.5 0 L838.7 76.8M856.5 0 L874.4 76.8M886.7 0 L908.4 76.8M920.4 0 L946.4 76.8M953.9 0 L984.4 76.8M990.7 0 L1026.3 76.8M1024.8 0 L1065.6 76.8M1060.0 0 L1106.3 76.8M1094.0 0 L1146.0 76.8M1129.3 0 L1187.7 76.8M1162.9 0 L1227.9 76.8M1195.1 0 L1266.7 76.8M1233.1 0 L1313.1 76.8M1271.1 0 L1360.0 76.8M1307.8 0 L1406.1 76.8" stroke="#3a2410" stroke-width="1.200" stroke-opacity=".85" fill="none"/><circle cx="-43.7" cy="29.2" r="1.300" fill="#3a2410"/><circle cx="-3.7" cy="27.8" r="1.300" fill="#3a2410"/><circle cx="-31.6" cy="36.8" r="1.300" fill="#3a2410"/><circle cx="20.8" cy="28.0" r="1.300" fill="#3a2410"/><circle cx="12.9" cy="35.0" r="1.300" fill="#3a2410"/><circle cx="57.5" cy="35.9" r="1.300" fill="#3a2410"/><circle cx="102.8" cy="30.0" r="1.300" fill="#3a2410"/><circle cx="131.8" cy="37.9" r="1.300" fill="#3a2410"/><circle cx="170.7" cy="30.5" r="1.300" fill="#3a2410"/><circle cx="212.4" cy="28.8" r="1.300" fill="#3a2410"/><circle cx="253.4" cy="28.6" r="1.300" fill="#3a2410"/><circle cx="238.2" cy="38.0" r="1.300" fill="#3a2410"/><circle cx="327.8" cy="28.2" r="1.300" fill="#3a2410"/><circle cx="323.6" cy="37.6" r="1.300" fill="#3a2410"/><circle cx="357.3" cy="36.7" r="1.300" fill="#3a2410"/><circle cx="389.4" cy="35.1" r="1.300" fill="#3a2410"/><circle cx="468.6" cy="34.3" r="1.300" fill="#3a2410"/><circle cx="497.7" cy="30.6" r="1.300" fill="#3a2410"/><circle cx="532.8" cy="34.0" r="1.300" fill="#3a2410"/><circle cx="571.2" cy="38.4" r="1.300" fill="#3a2410"/><circle cx="615.8" cy="30.9" r="1.300" fill="#3a2410"/><circle cx="608.5" cy="37.9" r="1.300" fill="#3a2410"/><circle cx="681.9" cy="31.4" r="1.300" fill="#3a2410"/><circle cx="679.4" cy="38.3" r="1.300" fill="#3a2410"/><circle cx="709.2" cy="34.9" r="1.300" fill="#3a2410"/><circle cx="775.1" cy="30.0" r="1.300" fill="#3a2410"/><circle cx="779.9" cy="35.7" r="1.300" fill="#3a2410"/><circle cx="813.3" cy="34.0" r="1.300" fill="#3a2410"/><circle cx="849.7" cy="31.9" r="1.300" fill="#3a2410"/><circle cx="855.2" cy="37.9" r="1.300" fill="#3a2410"/><circle cx="915.1" cy="34.5" r="1.300" fill="#3a2410"/><circle cx="981.4" cy="28.3" r="1.300" fill="#3a2410"/><circle cx="984.3" cy="36.1" r="1.300" fill="#3a2410"/><circle cx="1015.9" cy="27.7" r="1.300" fill="#3a2410"/><circle cx="1061.3" cy="32.2" r="1.300" fill="#3a2410"/><circle cx="1097.9" cy="34.9" r="1.300" fill="#3a2410"/><circle cx="1144.1" cy="36.2" r="1.300" fill="#3a2410"/><circle cx="1167.2" cy="27.8" r="1.300" fill="#3a2410"/><circle cx="1179.8" cy="38.3" r="1.300" fill="#3a2410"/><circle cx="1198.9" cy="27.7" r="1.300" fill="#3a2410"/><circle cx="1213.2" cy="34.9" r="1.300" fill="#3a2410"/><circle cx="1297.8" cy="36.6" r="1.300" fill="#3a2410"/><circle cx="1332.0" cy="30.1" r="1.300" fill="#3a2410"/><circle cx="1329.0" cy="36.3" r="1.300" fill="#3a2410"/><rect x="0" y="0" width="1296" height="76.8" fill="url(#fl)"/><rect x="0" y="0" width="1296" height="76.8" fill="url(#ft)"/></svg>
<span class="t" style="left:847.29px;top:386.2px;line-height:48px;font-size:43px;color:#0a0a0a;transform:scaleX(1.0045);-webkit-text-stroke:0.2px #0a0a0a;">CANTIDAD</span>
<span class="t" style="left:1081.92px;top:386.2px;line-height:48px;font-size:43px;color:#0a0a0a;transform:scaleX(0.8919);-webkit-text-stroke:0.2px #0a0a0a;">DE</span>
<span class="t" style="left:1139.00px;top:386.2px;line-height:48px;font-size:43px;color:#0a0a0a;transform:scaleX(0.9875);-webkit-text-stroke:0.2px #0a0a0a;">TINTE</span>
<span class="t" style="left:1264.30px;top:386.2px;line-height:48px;font-size:43px;color:#0a0a0a;transform:scaleX(1.1500);-webkit-text-stroke:0.2px #0a0a0a;">Y</span>
<span class="t" style="left:1305.36px;top:386.2px;line-height:48px;font-size:43px;color:#0a0a0a;transform:scaleX(0.8791);-webkit-text-stroke:0.2px #0a0a0a;">DE</span>
<span class="t" style="left:1370.71px;top:386.2px;line-height:48px;font-size:43px;color:#0a0a0a;transform:scaleX(1.0960);-webkit-text-stroke:0.2px #0a0a0a;">H</span>
<span class="t" style="left:1414.93px;top:386.2px;line-height:48px;font-size:43px;color:#0a0a0a;transform:scaleX(1.1867);-webkit-text-stroke:0.2px #0a0a0a;">O</span>
<span class="t" style="left:1402.30px;top:404.7px;line-height:24px;font-size:21.5px;color:#0a0a0a;transform:scaleX(1.2000);-webkit-text-stroke:0.3px #0a0a0a;">2</span>
<span class="t" style="left:1452.40px;top:404.7px;line-height:24px;font-size:21.5px;color:#0a0a0a;transform:scaleX(1.1000);-webkit-text-stroke:0.3px #0a0a0a;">2</span>
<div class="a" style="left:648px;top:493.500px;width:768px;height:3px;background:#b71c46"></div>
<svg style="left:0;top:0" width="1920" height="1080"><path d="M517.5 343.4 H750.7 Q760.7 343.4 760.7 353.4 V420 Q760.7 430 750.7 430 H640 L630.8 451.5 L624 430 H517.5 Q507.5 430 507.5 420 V353.4 Q507.5 343.4 517.5 343.4Z" fill="#fff" stroke="#111" stroke-width="1.900" stroke-linejoin="round"/></svg>
<span class="t" style="left:573.69px;top:373.8px;line-height:22px;font-size:18px;color:#111;transform:scaleX(1.0117);font-family:'DejaVu Sans','Liberation Sans',sans-serif;-webkit-text-stroke:0.35px #111;">Hola</span>
<span class="t" style="left:623.57px;top:373.8px;line-height:22px;font-size:18px;color:#111;transform:scaleX(1.1254);font-family:'DejaVu Sans','Liberation Sans',sans-serif;-webkit-text-stroke:0.35px #111;">chic@s</span>
<svg style="left:0;top:0" width="1920" height="1080"><path d="M1425.6 493.7 H1695.2 Q1705.2 493.7 1705.2 503.7 V583.5 Q1705.2 593.5 1695.2 593.5 H1567.5 L1557 620 L1549 593.5 H1425.6 Q1415.6 593.5 1415.6 583.5 V503.7 Q1415.6 493.7 1425.6 493.7Z" fill="#fff" stroke="#111" stroke-width="1.900" stroke-linejoin="round"/></svg>
<span class="t" style="left:1448.51px;top:529.3px;line-height:24px;font-size:20px;color:#111;transform:scaleX(1.0944);font-family:'DejaVu Sans','Liberation Sans',sans-serif;-webkit-text-stroke:0.35px #111;">Hasta</span>
<span class="t" style="left:1522.21px;top:529.3px;line-height:24px;font-size:20px;color:#111;transform:scaleX(1.0928);font-family:'DejaVu Sans','Liberation Sans',sans-serif;-webkit-text-stroke:0.35px #111;">la</span>
<span class="t" style="left:1551.65px;top:529.3px;line-height:24px;font-size:20px;color:#111;transform:scaleX(1.0510);font-family:'DejaVu Sans','Liberation Sans',sans-serif;-webkit-text-stroke:0.35px #111;">próxima</span>
<span class="t" style="left:1636.61px;top:529.3px;line-height:24px;font-size:20px;color:#111;transform:scaleX(0.8931);font-family:'DejaVu Sans','Liberation Sans',sans-serif;font-style:italic;-webkit-text-stroke:0.35px #111;">!!!!!</span>
<div class="a" style="left:762px;top:524px;width:635px;height:304.500px;background:#000"></div>
<div class="a" style="left:763.500px;top:556.500px;width:632.500px;height:251.700px;background:#fff"></div>
<span class="t" style="left:773.53px;top:528.7px;line-height:23px;font-size:17.5px;color:#9b9b9b;transform:scaleX(0.9749);">Privacy &amp; Terms</span>
<div class="a" style="left:919px;top:561.500px;width:147.6px;height:43px;background:#e6e6e6;border:1px solid #9c9c9c;border-radius:3.500px;box-sizing:border-box"></div>
<div class="a" style="left:923.5px;top:565px;width:31.500px;height:36px;background:#fff;border:1.300px solid #5e5e5e;border-radius:3px;box-sizing:border-box"></div>
<div class="a" style="left:959.4px;top:565px;width:31.500px;height:36px;background:#f1f1f1;border:1px solid #d2d2d2;border-radius:3px;box-sizing:border-box"></div>
<div class="a" style="left:995.2px;top:565px;width:31.500px;height:36px;background:#f1f1f1;border:1px solid #d2d2d2;border-radius:3px;box-sizing:border-box"></div>
<div class="a" style="left:1031px;top:565px;width:31.500px;height:36px;background:#f1f1f1;border:1px solid #d2d2d2;border-radius:3px;box-sizing:border-box"></div>
<div class="a" style="left:1093px;top:561.500px;width:75.7px;height:43px;background:#e6e6e6;border:1px solid #9c9c9c;border-radius:3.500px;box-sizing:border-box"></div>
<div class="a" style="left:1097px;top:565px;width:31.500px;height:36px;background:#fff;border:1.300px solid #5e5e5e;border-radius:3px;box-sizing:border-box"></div>
<div class="a" style="left:1133px;top:565px;width:31.500px;height:36px;background:#f1f1f1;border:1px solid #d2d2d2;border-radius:3px;box-sizing:border-box"></div>
<svg style="left:0;top:0" width="1920" height="1080"><defs><linearGradient id="cy" x1="0" x2="1"><stop offset="0" stop-color="#8fc4ea"/><stop offset=".35" stop-color="#e3f1fb"/><stop offset="1" stop-color="#9fcdef"/></linearGradient><linearGradient id="bk" x1="0" x2="1"><stop offset="0" stop-color="#b9cbe6"/><stop offset=".45" stop-color="#8fa7cc"/><stop offset="1" stop-color="#5f7698"/></linearGradient></defs><circle cx="939.200" cy="583" r="12.500" fill="#8cc63f" stroke="#4a6a28" stroke-width=".900"/><rect x="962.500" y="580.500" width="26.500" height="5.200" fill="#ea8a93"/><rect x="1004.700" y="572" width="13" height="21.500" fill="#fbe95e" stroke="#c9b74a" stroke-width=".600"/><path d="M1040.500 573.500 V593.500 A6.700 2.300 0 0 0 1054 593.500 V573.500Z" fill="url(#cy)" stroke="#7db1dc" stroke-width=".600"/><ellipse cx="1047.250" cy="573.500" rx="6.750" ry="2.300" fill="#bfe0f6" stroke="#7db1dc" stroke-width=".600"/><circle cx="1112.700" cy="583" r="12.500" fill="#ff6fd6" stroke="#7a4a70" stroke-width=".900"/><path d="M1137.500 582 H1160 M1137.500 576.500 V587.500 M1160 576.500 V587.500" stroke="#c9c9c9" stroke-width="1" fill="none"/>
<circle cx="984" cy="638" r="26" fill="#fff" stroke="#8c8c8c" stroke-width=".900"/>
<circle cx="984" cy="694.6" r="26" fill="#fff" stroke="#8c8c8c" stroke-width=".900"/>
<circle cx="1040.5" cy="638" r="26" fill="#fff" stroke="#8c8c8c" stroke-width=".900"/>
<circle cx="1040.5" cy="694.6" r="26" fill="#fff" stroke="#8c8c8c" stroke-width=".900"/>
<circle cx="1119.2" cy="638" r="26" fill="#fff" stroke="#8c8c8c" stroke-width=".900"/><path d="M1093.2 638 H1145.2" stroke="#c4c4c4" stroke-width=".900"/>
<circle cx="1119.2" cy="694.6" r="26" fill="#fff" stroke="#8c8c8c" stroke-width=".900"/><path d="M1093.2 694.6 H1145.2" stroke="#c4c4c4" stroke-width=".900"/>
<circle cx="1175.6" cy="638" r="26" fill="#fff" stroke="#8c8c8c" stroke-width=".900"/><path d="M1149.6 638 H1201.6" stroke="#c4c4c4" stroke-width=".900"/>
<circle cx="1175.6" cy="694.6" r="26" fill="#fff" stroke="#8c8c8c" stroke-width=".900"/><path d="M1149.6 694.6 H1201.6" stroke="#c4c4c4" stroke-width=".900"/>
<path d="M903 766 Q905 741 930 739 Q945 736.500 962 738.500 Q985 738 1000 748 Q1008 756 1008 768Z" fill="#8cc63f" stroke="#3f5c22" stroke-width=".800"/><path d="M921 768 Q922 745 948 741.500 M931 768 Q934 748 962 743 Q982 746 984 768 M948 741.500 Q975 741 990 768 M962 738.500 Q996 744 1001 768" stroke="#3f5c22" stroke-width=".700" fill="none"/><path d="M898 762 Q955 775 1013 762 L1002 796 Q955 809 909 796Z" fill="url(#bk)" stroke="#50607a" stroke-width=".700"/><path d="M898 761.500 Q955 775 1013 761.500" stroke="#1d2a3a" stroke-width="2" fill="none"/><circle cx="949.500" cy="784.500" r="10" fill="#8cc63f" stroke="#3f5c22" stroke-width=".700"/><path d="M965 784.500 H971" stroke="#222" stroke-width=".800"/><text x="968" y="782.500" font-family="Liberation Sans,sans-serif" font-size="7.500" fill="#222" text-anchor="middle">1</text><text x="968" y="792.500" font-family="Liberation Sans,sans-serif" font-size="7.500" fill="#222" text-anchor="middle">1</text>
<circle cx="1021.600" cy="745.8" r="4.700" fill="#f6e633" stroke="#8a7f20" stroke-width=".600"/><path d="M1019 747.1 L1021.600 744.3 L1024.200 747.1" stroke="#222" stroke-width="1.300" fill="none"/>
<circle cx="1021.600" cy="756.8" r="4.700" fill="#d6d6d6" stroke="#9a9a9a" stroke-width=".600"/><path d="M1019 755.6 L1021.600 758.3 L1024.200 755.6" stroke="#9a9a9a" stroke-width="1.300" fill="none"/>
<circle cx="1021.600" cy="778.5" r="4.700" fill="#f6e633" stroke="#8a7f20" stroke-width=".600"/><path d="M1019 779.8 L1021.600 777 L1024.200 779.8" stroke="#222" stroke-width="1.300" fill="none"/>
<circle cx="1021.600" cy="789.5" r="4.700" fill="#d6d6d6" stroke="#9a9a9a" stroke-width=".600"/><path d="M1019 788.3 L1021.600 791 L1024.200 788.3" stroke="#9a9a9a" stroke-width="1.300" fill="none"/>
<path d="M1030 767.500 H1066.600 M1093 767.500 H1129.600" stroke="#111" stroke-width="1.800"/><path d="M1072 764.300 H1087 M1072 770.800 H1087" stroke="#111" stroke-width="2"/><circle cx="1138.800" cy="767.800" r="4.600" fill="#6aa329" stroke="#3f6a15" stroke-width=".600"/><path d="M1140 765.300 L1137.400 767.800 L1140 770.300" stroke="#16300a" stroke-width="1.300" fill="none"/><circle cx="1150.700" cy="767.800" r="4.600" fill="#6aa329" stroke="#3f6a15" stroke-width=".600"/><path d="M1149.500 765.300 L1152.100 767.800 L1149.500 770.300" stroke="#16300a" stroke-width="1.300" fill="none"/><circle cx="1275.300" cy="795.300" r="8.300" fill="#f7941d" stroke="#c9700f" stroke-width=".800"/><path d="M1278.800 792.500 A4.300 4.300 0 1 0 1279.600 796.500" stroke="#fff" stroke-width="1.700" fill="none"/><path d="M1280.600 790 V794.600 H1276Z" fill="#fff"/>
<path d="M1024.500 819.500 L1030.500 813.500 L1036.500 819.500 M1026.200 818.500 V824 H1029 V820.500 H1032 V824 H1034.800 V818.500" stroke="#fff" stroke-width="1.500" fill="none"/><path d="M1026.200 818.500 L1030.500 814.500 L1034.800 818.500 V824 H1032 V820.500 H1029 V824 H1026.200Z" fill="#fff"/><rect x="1052.500" y="809.500" width="20" height="12" fill="#fff"/><rect x="1054.500" y="812" width="5" height="7" fill="#fbe95e"/><rect x="1064" y="812" width="6" height="7" fill="#ff6fd6"/><path d="M1060.500 815.500 H1063" stroke="#444" stroke-width=".800"/><rect x="1088" y="809.500" width="19.500" height="12" fill="#7c7c7c"/><path d="M1091 817 Q1095 822 1099 817Z" fill="#6d8fb5"/><circle cx="1095" cy="815" r="2.500" fill="#9ab"/><path d="M1100.500 815.500 H1105" stroke="#555" stroke-width=".800"/><path d="M1320.500 817.500 H1323 L1326.500 814.500 V824 L1323 821 H1320.500Z" stroke="#fff" stroke-width="1" fill="none"/><path d="M1329 817 L1333 821.500 M1333 817 L1329 821.500" stroke="#fff" stroke-width="1"/><circle cx="1388.500" cy="814.300" r="1.200" fill="#fff"/><circle cx="1388.500" cy="819" r="1.200" fill="#fff"/><circle cx="1388.500" cy="823.700" r="1.200" fill="#fff"/><path d="M1359 813 L1362.500 810 L1362.500 813.500Z" fill="#f6e633"/>
</svg>
<span class="t" style="left:1039.27px;top:733.5px;line-height:32px;font-size:29.5px;color:#111;transform:scaleX(1.0333);">0</span>
<span class="t" style="left:1040.96px;top:771.5px;line-height:32px;font-size:29.5px;color:#111;transform:scaleX(0.7692);">1</span>
<span class="t" style="left:1102.27px;top:733.5px;line-height:32px;font-size:29.5px;color:#111;transform:scaleX(1.0333);">0</span>
<span class="t" style="left:1102.19px;top:771.5px;line-height:32px;font-size:29.5px;color:#111;transform:scaleX(1.1071);">2</span>
<span class="t" style="left:768.20px;top:812.8px;line-height:12px;font-size:9.5px;color:#fff;transform:scaleX(0.9121);-webkit-text-stroke:0.25px #fff;">Fractions: Equality</span>
<span class="t" style="left:1047.50px;top:823px;line-height:6px;font-size:5px;color:#f6e633;font-weight:700;transform:scaleX(1.0110);">Equality Lab</span>
<span class="t" style="left:1091.50px;top:823px;line-height:6px;font-size:5px;color:#8a8a8a;font-weight:700;transform:scaleX(0.8501);">Game</span>
<span class="t" style="left:1340.05px;top:810.8px;line-height:18px;font-size:17.5px;color:#3fb8f0;font-weight:700;transform:scaleX(0.9545);-webkit-text-stroke:0.4px #3fb8f0;">P</span>
<span class="t" style="left:1352.50px;top:810.8px;line-height:18px;font-size:17.5px;color:#f6e633;font-weight:700;transform:scaleX(1.0000);font-style:italic;-webkit-text-stroke:0.4px #f6e633;">h</span>
<span class="t" style="left:1363.19px;top:810.8px;line-height:18px;font-size:17.5px;color:#3fb8f0;font-weight:700;transform:scaleX(0.8075);-webkit-text-stroke:0.4px #3fb8f0;">ET</span>
<svg style="left:0;top:0" width="0" height="0"><defs><clipPath id="clR"><rect x="-50" y="-50" width="1200" height="1092"/></clipPath><g id="chL"><g fill="#fff" stroke="#fff" stroke-width="20" stroke-linejoin="round"><path d="M500 395 L530 372 C536 398 528 428 508 452 L440 458 L425 425Z"/><path d="M768 520 L838 325 C840 298 852 272 888 238 C900 238 896 262 886 274 C910 262 938 250 958 254 C980 262 984 284 968 306 C946 330 925 350 898 360 L866 372 L822 540Z"/><path d="M198 1715 L292 1715 C280 1790 268 1840 272 1925 L228 2032 L160 2048 C185 2000 215 1950 215 1880 C205 1820 205 1770 198 1715Z"/><path d="M465 1715 L557 1715 C550 1770 550 1820 542 1880 C545 1950 572 2000 598 2048 L530 2032 L485 1925 C490 1840 478 1790 465 1715Z"/><path d="M270 1922 C292 1935 294 1962 286 1992 L276 2066 L262 2066 L262 2000 C240 2042 200 2076 150 2080 C122 2076 122 2058 136 2050 C165 2047 200 2042 226 2030 C240 1990 255 1950 270 1922Z"/><path d="M486 1922 C464 1935 462 1962 470 1992 L480 2066 L494 2066 L494 2000 C516 2042 556 2076 606 2080 C634 2076 634 2058 620 2050 C591 2047 556 2042 530 2030 C516 1990 501 1950 486 1922Z"/><path d="M236 890 L522 890 C535 1000 548 1080 552 1130 L578 1712 C540 1726 480 1726 445 1716 L385 1090 L378 1020 L372 1090 L315 1722 C270 1726 215 1722 180 1710 L205 1240 C215 1130 225 1000 236 890Z"/><path d="M150 925 L224 898 L240 1080 C262 1120 280 1160 270 1195 C262 1225 245 1245 232 1245 C215 1240 205 1225 203 1212 C195 1205 196 1192 203 1188 C196 1175 200 1160 210 1150 L205 1110Z"/><path d="M415 400 L505 420 L470 530 L385 562 L335 470Z"/><path d="M335 468 L385 558 L455 462 C480 452 492 455 500 460 L714 583 L736 524 C775 530 810 545 842 566 C835 620 815 670 796 702 C785 722 770 728 755 722 C700 700 600 630 520 578 L470 600 C492 630 495 665 462 702 C470 760 500 810 518 862 L240 862 C255 810 290 750 298 702 C272 680 262 640 272 592 C250 650 210 730 190 785 L228 895 C195 915 160 925 125 930 C105 880 92 820 90 760 C110 700 140 620 175 560 C190 520 200 495 218 478 C255 465 300 462 335 468Z"/><path d="M238 855 L520 855 L524 900 L234 900Z"/><path d="M420 148 C462 128 510 150 522 192 C532 232 536 292 528 342 C522 382 502 410 478 420 C450 430 410 416 392 396 C376 350 370 300 378 258 C384 218 396 174 420 148Z"/><path d="M529 198 L530 196 L531 192 L532 186 L532 179 L532 172 L534 164 L532 156 L531 150 L530 144 L528 138 L526 132 L525 126 L525 119 L522 113 L519 108 L516 103 L511 100 L505 97 L500 94 L496 89 L490 86 L485 82 L479 79 L472 77 L466 77 L460 75 L455 73 L449 71 L443 69 L437 65 L431 64 L424 65 L418 65 L412 64 L406 64 L400 63 L394 61 L388 60 L382 60 L376 61 L370 61 L364 63 L358 65 L352 64 L346 63 L340 63 L334 63 L328 64 L322 66 L316 69 L310 71 L304 71 L298 72 L292 73 L286 73 L280 75 L274 79 L269 83 L263 85 L258 88 L252 90 L245 90 L238 91 L233 95 L227 99 L222 103 L218 108 L212 112 L205 113 L199 115 L194 120 L188 124 L184 130 L183 138 L178 143 L171 145 L167 149 L161 152 L155 155 L154 164 L158 172 L158 179 L157 186 L156 192 L149 197 L143 200 L142 206 L140 214 L137 219 L135 226 L133 232 L126 234 L116 234 L111 238 L107 243 L102 247 L103 254 L109 258 L111 263 L109 271 L110 279 L108 285 L105 289 L106 295 L110 305 L107 311 L102 317 L99 323 L92 327 L86 331 L87 339 L89 347 L89 353 L90 359 L91 365 L85 371 L82 379 L86 385 L90 391 L95 397 L104 400 L107 405 L104 414 L104 421 L106 428 L107 434 L111 439 L118 440 L128 440 L132 446 L137 447 L142 445 L150 441 L151 433 L149 425 L150 416 L153 407 L155 399 L157 398 L157 401 L157 406 L159 412 L160 420 L163 428 L166 435 L163 444 L163 451 L165 457 L167 465 L173 471 L179 475 L181 481 L182 487 L185 490 L191 493 L200 494 L206 487 L208 479 L210 474 L211 466 L214 457 L216 449 L217 444 L217 443 L218 444 L219 448 L221 455 L223 462 L225 470 L222 478 L224 485 L226 491 L230 498 L238 502 L243 506 L245 511 L248 514 L253 514 L259 511 L266 505 L265 495 L264 489 L266 482 L267 474 L270 465 L271 458 L271 451 L271 446 L272 444 L274 446 L275 451 L277 458 L276 468 L275 477 L279 485 L281 491 L289 496 L294 499 L298 502 L303 501 L309 496 L315 490 L316 480 L314 474 L316 467 L319 459 L321 452 L324 445 L325 441 L325 439 L327 440 L330 446 L335 454 L338 463 L337 471 L339 479 L346 483 L352 483 L356 479 L359 472 L363 465 L371 461 L375 456 L378 449 L380 442 L381 435 L382 428 L385 424 L394 421 L398 418 L396 415 L393 411 L388 406 L384 400 L382 392 L382 387 L382 381 L382 375 L383 368 L384 361 L385 354 L385 347 L384 341 L383 335 L384 330 L386 321 L382 315 L378 310 L375 305 L372 298 L371 292 L374 287 L378 281 L381 275 L385 270 L389 263 L389 256 L389 250 L391 245 L393 238 L394 231 L396 225 L396 219 L396 213 L397 205 L398 200 L400 194 L403 187 L407 181 L411 175 L414 168 L417 162 L420 157 L424 151 L428 148 L433 144 L439 141 L445 139 L452 137 L458 137 L464 136 L470 136 L476 138 L482 141 L488 144 L494 147 L500 151 L505 156 L510 160 L514 165 L517 172 L521 180 L523 187 L525 193 L527 197Z"/></g><g stroke="#2a1812" stroke-width="2.600" stroke-linejoin="round"><path d="M500 395 L530 372 C536 398 528 428 508 452 L440 458 L425 425Z" fill="#c9744b"/><path d="M768 520 L838 325 C840 298 852 272 888 238 C900 238 896 262 886 274 C910 262 938 250 958 254 C980 262 984 284 968 306 C946 330 925 350 898 360 L866 372 L822 540Z" fill="#fde0c6"/><path d="M198 1715 L292 1715 C280 1790 268 1840 272 1925 L228 2032 L160 2048 C185 2000 215 1950 215 1880 C205 1820 205 1770 198 1715Z" fill="#fde0c6"/><path d="M465 1715 L557 1715 C550 1770 550 1820 542 1880 C545 1950 572 2000 598 2048 L530 2032 L485 1925 C490 1840 478 1790 465 1715Z" fill="#fde0c6"/><path d="M270 1922 C292 1935 294 1962 286 1992 L276 2066 L262 2066 L262 2000 C240 2042 200 2076 150 2080 C122 2076 122 2058 136 2050 C165 2047 200 2042 226 2030 C240 1990 255 1950 270 1922Z" fill="#dc3020"/><path d="M486 1922 C464 1935 462 1962 470 1992 L480 2066 L494 2066 L494 2000 C516 2042 556 2076 606 2080 C634 2076 634 2058 620 2050 C591 2047 556 2042 530 2030 C516 1990 501 1950 486 1922Z" fill="#dc3020"/><path d="M236 890 L522 890 C535 1000 548 1080 552 1130 L578 1712 C540 1726 480 1726 445 1716 L385 1090 L378 1020 L372 1090 L315 1722 C270 1726 215 1722 180 1710 L205 1240 C215 1130 225 1000 236 890Z" fill="#35312f"/><path d="M150 925 L224 898 L240 1080 C262 1120 280 1160 270 1195 C262 1225 245 1245 232 1245 C215 1240 205 1225 203 1212 C195 1205 196 1192 203 1188 C196 1175 200 1160 210 1150 L205 1110Z" fill="#fde0c6"/><path d="M415 400 L505 420 L470 530 L385 562 L335 470Z" fill="#fde0c6"/><path d="M335 468 L385 558 L455 462 C480 452 492 455 500 460 L714 583 L736 524 C775 530 810 545 842 566 C835 620 815 670 796 702 C785 722 770 728 755 722 C700 700 600 630 520 578 L470 600 C492 630 495 665 462 702 C470 760 500 810 518 862 L240 862 C255 810 290 750 298 702 C272 680 262 640 272 592 C250 650 210 730 190 785 L228 895 C195 915 160 925 125 930 C105 880 92 820 90 760 C110 700 140 620 175 560 C190 520 200 495 218 478 C255 465 300 462 335 468Z" fill="#dc3020"/><path d="M238 855 L520 855 L524 900 L234 900Z" fill="#2b2727"/><path d="M420 148 C462 128 510 150 522 192 C532 232 536 292 528 342 C522 382 502 410 478 420 C450 430 410 416 392 396 C376 350 370 300 378 258 C384 218 396 174 420 148Z" fill="#fde0c6"/><path d="M529 198 L530 196 L531 192 L532 186 L532 179 L532 172 L534 164 L532 156 L531 150 L530 144 L528 138 L526 132 L525 126 L525 119 L522 113 L519 108 L516 103 L511 100 L505 97 L500 94 L496 89 L490 86 L485 82 L479 79 L472 77 L466 77 L460 75 L455 73 L449 71 L443 69 L437 65 L431 64 L424 65 L418 65 L412 64 L406 64 L400 63 L394 61 L388 60 L382 60 L376 61 L370 61 L364 63 L358 65 L352 64 L346 63 L340 63 L334 63 L328 64 L322 66 L316 69 L310 71 L304 71 L298 72 L292 73 L286 73 L280 75 L274 79 L269 83 L263 85 L258 88 L252 90 L245 90 L238 91 L233 95 L227 99 L222 103 L218 108 L212 112 L205 113 L199 115 L194 120 L188 124 L184 130 L183 138 L178 143 L171 145 L167 149 L161 152 L155 155 L154 164 L158 172 L158 179 L157 186 L156 192 L149 197 L143 200 L142 206 L140 214 L137 219 L135 226 L133 232 L126 234 L116 234 L111 238 L107 243 L102 247 L103 254 L109 258 L111 263 L109 271 L110 279 L108 285 L105 289 L106 295 L110 305 L107 311 L102 317 L99 323 L92 327 L86 331 L87 339 L89 347 L89 353 L90 359 L91 365 L85 371 L82 379 L86 385 L90 391 L95 397 L104 400 L107 405 L104 414 L104 421 L106 428 L107 434 L111 439 L118 440 L128 440 L132 446 L137 447 L142 445 L150 441 L151 433 L149 425 L150 416 L153 407 L155 399 L157 398 L157 401 L157 406 L159 412 L160 420 L163 428 L166 435 L163 444 L163 451 L165 457 L167 465 L173 471 L179 475 L181 481 L182 487 L185 490 L191 493 L200 494 L206 487 L208 479 L210 474 L211 466 L214 457 L216 449 L217 444 L217 443 L218 444 L219 448 L221 455 L223 462 L225 470 L222 478 L224 485 L226 491 L230 498 L238 502 L243 506 L245 511 L248 514 L253 514 L259 511 L266 505 L265 495 L264 489 L266 482 L267 474 L270 465 L271 458 L271 451 L271 446 L272 444 L274 446 L275 451 L277 458 L276 468 L275 477 L279 485 L281 491 L289 496 L294 499 L298 502 L303 501 L309 496 L315 490 L316 480 L314 474 L316 467 L319 459 L321 452 L324 445 L325 441 L325 439 L327 440 L330 446 L335 454 L338 463 L337 471 L339 479 L346 483 L352 483 L356 479 L359 472 L363 465 L371 461 L375 456 L378 449 L380 442 L381 435 L382 428 L385 424 L394 421 L398 418 L396 415 L393 411 L388 406 L384 400 L382 392 L382 387 L382 381 L382 375 L383 368 L384 361 L385 354 L385 347 L384 341 L383 335 L384 330 L386 321 L382 315 L378 310 L375 305 L372 298 L371 292 L374 287 L378 281 L381 275 L385 270 L389 263 L389 256 L389 250 L391 245 L393 238 L394 231 L396 225 L396 219 L396 213 L397 205 L398 200 L400 194 L403 187 L407 181 L411 175 L414 168 L417 162 L420 157 L424 151 L428 148 L433 144 L439 141 L445 139 L452 137 L458 137 L464 136 L470 136 L476 138 L482 141 L488 144 L494 147 L500 151 L505 156 L510 160 L514 165 L517 172 L521 180 L523 187 L525 193 L527 197Z" fill="#c9744b"/></g><path d="M205 215 L187 242 L205 269 L187 296 L205 323 L187 350 L205 377 L187 404 L205 431 L187 458" stroke="#a65c39" stroke-width="22" fill="none" stroke-linecap="round" stroke-linejoin="round"/><path d="M261 205 L243 232 L261 259 L243 286 L261 313 L243 340 L261 367 L243 394 L261 421 L243 448 L261 475" stroke="#a65c39" stroke-width="22" fill="none" stroke-linecap="round" stroke-linejoin="round"/><path d="M320 285 L304 312 L320 339 L304 366 L320 393 L304 420 L320 447 L304 474" stroke="#a65c39" stroke-width="20" fill="none" stroke-linecap="round" stroke-linejoin="round"/><path d="M363 290 L349 317 L363 344 L349 371 L363 398 L349 425 L363 452" stroke="#a65c39" stroke-width="15" fill="none" stroke-linecap="round" stroke-linejoin="round"/><path d="M137 300 L123 326 L137 352 L123 378 L137 404 L123 430" stroke="#a65c39" stroke-width="15" fill="none" stroke-linecap="round" stroke-linejoin="round"/><ellipse cx="412" cy="265" rx="25" ry="11" fill="#fff" stroke="#2a1812" stroke-width="2"/><circle cx="418" cy="264" r="9.500" fill="#7fb832"/><circle cx="418" cy="264" r="4" fill="#1c2a10"/><ellipse cx="499" cy="254" rx="21" ry="10.500" fill="#fff" stroke="#2a1812" stroke-width="2"/><circle cx="505" cy="253" r="9.500" fill="#7fb832"/><circle cx="505" cy="253" r="4" fill="#1c2a10"/><path d="M384 258 C400 244 428 246 440 258 M477 246 C492 236 514 238 522 250 M518 246 L542 236 M520 252 L542 246" stroke="#2a1812" stroke-width="3.500" fill="none"/><path d="M388 226 C404 212 428 212 442 220 M472 198 C490 182 516 184 530 200" stroke="#8a4a2c" stroke-width="8" fill="none" stroke-linecap="round"/><g fill="#d59a72"><circle cx="398" cy="300" r="2"/><circle cx="410" cy="308" r="2"/><circle cx="420" cy="298" r="2"/><circle cx="404" cy="316" r="2"/><circle cx="480" cy="290" r="2"/><circle cx="492" cy="298" r="2"/><circle cx="504" cy="288" r="2"/><circle cx="514" cy="298" r="2"/><circle cx="470" cy="298" r="2"/></g><path d="M432 348 C455 340 480 338 500 342 C492 372 470 384 450 378 C440 372 434 360 432 348Z" fill="#7a1f2c" stroke="#2a1812" stroke-width="2"/><path d="M438 350 C458 344 480 342 496 345 C494 354 488 358 480 360 C462 362 448 360 438 350Z" fill="#fff"/><path d="M432 348 C445 336 462 338 470 342 C480 336 494 336 500 342" stroke="#c8677a" stroke-width="5" fill="none"/><path d="M458 300 C462 308 460 314 452 316" stroke="#d9a98a" stroke-width="2.500" fill="none"/><path d="M338 540 L376 630 M425 540 L382 630" stroke="#b8281c" stroke-width="2.500" fill="none"/><circle cx="378" cy="660" r="29" fill="#0c0808"/><circle cx="378" cy="652" r="13" fill="#dc3020"/><path d="M272 592 C262 640 272 680 298 702 C310 706 322 706 330 702 M470 600 C492 630 495 665 462 702 C452 706 440 706 432 702 M736 524 C730 570 712 625 696 664 M105 895 C140 890 180 878 215 860" stroke="#8f1c12" stroke-width="2.500" fill="none"/><path d="M236 874 C300 880 420 882 522 872 L523 892 C420 902 300 902 250 904 C238 896 236 886 236 874Z" fill="#dc3020"/><rect x="330" y="877" width="100" height="25" fill="#9b9492" stroke="#5c5654" stroke-width="2"/><path d="M378 1020 L380 1100 M232 1462 L285 1462 M472 1462 L525 1462" stroke="#5a5450" stroke-width="3" fill="none"/></g><g id="chR" clip-path="url(#clR)"><g fill="#fff" stroke="#fff" stroke-width="20" stroke-linejoin="round"><path d="M160 505 L165 292 C140 262 125 236 114 216 L68 202 C58 192 68 178 82 184 L126 196 L80 150 C70 136 88 126 98 140 L142 182 L110 112 C104 94 124 88 132 102 L162 170 L158 106 C158 88 180 88 182 106 L192 182 C202 202 216 206 236 200 L266 194 C288 194 284 214 268 218 L240 230 C224 246 218 266 216 286 L222 500Z"/><path d="M640 45 L646 44 L652 44 L658 44 L664 45 L670 49 L676 52 L683 51 L689 50 L696 50 L703 50 L709 51 L714 56 L719 61 L725 62 L731 64 L737 66 L744 66 L751 68 L756 73 L760 78 L765 82 L769 88 L774 91 L782 92 L788 93 L792 98 L796 103 L800 109 L801 116 L803 123 L809 126 L815 130 L819 136 L824 140 L827 146 L824 155 L823 162 L827 167 L830 172 L833 177 L839 182 L843 187 L842 194 L838 202 L838 208 L838 214 L838 220 L845 225 L853 228 L856 233 L855 240 L857 246 L857 253 L855 261 L859 266 L868 268 L873 272 L876 278 L880 282 L882 288 L878 297 L876 305 L882 309 L887 314 L891 319 L898 323 L902 329 L898 337 L894 345 L896 351 L896 357 L899 363 L907 368 L912 375 L908 382 L906 389 L904 396 L899 402 L900 408 L907 414 L911 420 L909 428 L909 435 L903 441 L894 446 L893 452 L895 459 L895 465 L894 471 L895 481 L885 485 L876 488 L873 492 L871 494 L868 494 L860 494 L850 491 L850 481 L851 473 L852 465 L849 458 L847 452 L845 450 L845 452 L844 458 L845 466 L843 474 L834 478 L828 481 L828 488 L829 497 L825 503 L822 509 L818 514 L809 512 L803 505 L798 504 L792 503 L788 499 L779 495 L780 485 L779 477 L777 471 L774 467 L771 470 L769 478 L774 489 L771 498 L763 502 L757 506 L748 505 L744 504 L740 509 L731 512 L724 508 L717 503 L716 496 L723 488 L719 481 L718 475 L716 470 L714 466 L700 466 L696 466 L691 465 L685 465 L678 464 L671 464 L664 463 L656 463 L648 462 L641 462 L633 462 L626 462 L619 462 L613 463 L608 463 L603 465 L600 466 L597 470 L595 474 L596 480 L599 486 L602 493 L605 500 L610 506 L614 513 L612 520 L610 527 L610 534 L610 542 L611 549 L617 557 L615 564 L608 568 L605 571 L598 575 L594 573 L586 576 L578 574 L576 565 L577 555 L576 547 L574 540 L570 537 L567 539 L566 545 L564 552 L567 562 L562 569 L552 569 L546 571 L541 576 L535 577 L527 581 L519 582 L515 575 L514 565 L511 559 L510 553 L507 547 L496 540 L500 531 L499 524 L498 520 L494 523 L483 529 L486 541 L478 546 L469 545 L460 539 L463 531 L468 523 L463 515 L459 507 L457 500 L456 495 L456 493 L455 494 L453 500 L451 508 L445 515 L446 524 L449 533 L442 541 L431 540 L424 537 L424 531 L422 526 L413 524 L404 519 L402 511 L400 505 L402 498 L408 490 L406 483 L400 477 L397 470 L391 465 L387 460 L391 451 L394 442 L391 436 L390 430 L387 424 L380 418 L379 411 L385 405 L389 399 L391 392 L396 387 L395 381 L388 372 L387 365 L391 358 L393 352 L400 347 L408 342 L406 335 L402 326 L403 320 L403 312 L405 305 L415 301 L420 295 L419 288 L420 281 L418 274 L414 265 L418 259 L426 255 L430 250 L434 245 L439 241 L438 233 L435 224 L437 219 L443 214 L445 209 L451 203 L457 198 L454 191 L450 183 L450 176 L451 169 L453 163 L459 159 L466 155 L468 149 L467 142 L469 136 L470 129 L471 122 L476 118 L483 116 L488 113 L492 109 L497 105 L500 100 L503 94 L507 89 L514 87 L520 85 L525 82 L531 81 L537 79 L541 74 L545 68 L551 65 L557 63 L562 60 L569 61 L576 62 L581 59 L586 55 L592 53 L597 50 L602 47 L608 46 L615 49 L621 50 L627 49 L634 48Z"/><path d="M600 440 L720 440 L716 532 L665 632 L600 560Z"/><path d="M600 558 L665 632 L716 530 C760 528 800 532 830 545 C860 560 872 590 876 640 L871 810 L867 896 L893 1042 L495 1042 C496 1010 500 985 512 957 C530 910 552 850 572 800 C550 780 538 750 540 720 C545 700 555 685 566 670 C540 655 520 645 500 640 L270 726 C230 738 190 740 160 736 C140 670 130 590 130 522 C170 510 215 504 256 504 L264 590 L500 526 C540 528 575 540 600 558Z"/><path d="M499 976 C600 990 740 988 832 976 L832 1042 L495 1042Z"/><path d="M545 200 C590 160 680 165 725 215 C752 250 760 320 752 380 C744 430 700 475 655 485 C610 478 565 420 548 350 C535 300 530 240 545 200Z"/><path d="M528 250 C520 220 530 190 560 170 C600 152 650 156 690 190 C700 215 705 235 720 250 C700 248 680 240 668 222 C660 235 650 240 636 232 C624 220 626 200 640 186 C610 178 570 190 545 222 C538 232 532 242 528 250Z"/><path d="M532 250 L533 252 L534 256 L534 261 L535 267 L537 274 L533 282 L534 289 L538 296 L539 303 L542 310 L543 316 L543 322 L543 329 L546 335 L547 341 L550 347 L554 353 L556 359 L557 366 L560 372 L562 378 L564 384 L568 389 L573 393 L576 399 L579 405 L582 410 L584 416 L587 422 L591 426 L595 430 L600 435 L605 440 L609 444 L612 450 L615 455 L619 460 L622 464 L625 470 L627 475 L628 481 L627 487 L625 493 L624 500 L622 506 L621 512 L623 519 L624 525 L622 530 L620 537 L618 544 L614 551 L610 556 L614 564 L615 569 L612 574 L606 582 L597 581 L593 571 L592 570 L586 565 L583 559 L579 552 L576 545 L575 540 L572 538 L568 540 L565 545 L562 553 L562 563 L560 572 L553 575 L546 578 L540 577 L535 573 L529 575 L522 577 L516 575 L511 570 L506 564 L507 555 L510 548 L506 543 L501 538 L498 531 L493 523 L495 515 L500 509 L502 504 L500 498 L500 492 L497 486 L491 479 L492 473 L497 466 L499 460 L501 455 L505 449 L504 443 L499 436 L498 429 L501 424 L503 418 L507 412 L513 407 L513 400 L509 394 L507 388 L506 382 L503 376 L505 370 L511 364 L513 358 L511 352 L510 346 L508 340 L503 333 L504 326 L510 321 L514 315 L515 308 L517 302 L517 296 L514 290 L515 284 L519 277 L523 268 L525 260 L528 254 L530 250Z"/></g><g stroke="#2a1812" stroke-width="2.600" stroke-linejoin="round"><path d="M160 505 L165 292 C140 262 125 236 114 216 L68 202 C58 192 68 178 82 184 L126 196 L80 150 C70 136 88 126 98 140 L142 182 L110 112 C104 94 124 88 132 102 L162 170 L158 106 C158 88 180 88 182 106 L192 182 C202 202 216 206 236 200 L266 194 C288 194 284 214 268 218 L240 230 C224 246 218 266 216 286 L222 500Z" fill="#fde0c6"/><path d="M640 45 L646 44 L652 44 L658 44 L664 45 L670 49 L676 52 L683 51 L689 50 L696 50 L703 50 L709 51 L714 56 L719 61 L725 62 L731 64 L737 66 L744 66 L751 68 L756 73 L760 78 L765 82 L769 88 L774 91 L782 92 L788 93 L792 98 L796 103 L800 109 L801 116 L803 123 L809 126 L815 130 L819 136 L824 140 L827 146 L824 155 L823 162 L827 167 L830 172 L833 177 L839 182 L843 187 L842 194 L838 202 L838 208 L838 214 L838 220 L845 225 L853 228 L856 233 L855 240 L857 246 L857 253 L855 261 L859 266 L868 268 L873 272 L876 278 L880 282 L882 288 L878 297 L876 305 L882 309 L887 314 L891 319 L898 323 L902 329 L898 337 L894 345 L896 351 L896 357 L899 363 L907 368 L912 375 L908 382 L906 389 L904 396 L899 402 L900 408 L907 414 L911 420 L909 428 L909 435 L903 441 L894 446 L893 452 L895 459 L895 465 L894 471 L895 481 L885 485 L876 488 L873 492 L871 494 L868 494 L860 494 L850 491 L850 481 L851 473 L852 465 L849 458 L847 452 L845 450 L845 452 L844 458 L845 466 L843 474 L834 478 L828 481 L828 488 L829 497 L825 503 L822 509 L818 514 L809 512 L803 505 L798 504 L792 503 L788 499 L779 495 L780 485 L779 477 L777 471 L774 467 L771 470 L769 478 L774 489 L771 498 L763 502 L757 506 L748 505 L744 504 L740 509 L731 512 L724 508 L717 503 L716 496 L723 488 L719 481 L718 475 L716 470 L714 466 L700 466 L696 466 L691 465 L685 465 L678 464 L671 464 L664 463 L656 463 L648 462 L641 462 L633 462 L626 462 L619 462 L613 463 L608 463 L603 465 L600 466 L597 470 L595 474 L596 480 L599 486 L602 493 L605 500 L610 506 L614 513 L612 520 L610 527 L610 534 L610 542 L611 549 L617 557 L615 564 L608 568 L605 571 L598 575 L594 573 L586 576 L578 574 L576 565 L577 555 L576 547 L574 540 L570 537 L567 539 L566 545 L564 552 L567 562 L562 569 L552 569 L546 571 L541 576 L535 577 L527 581 L519 582 L515 575 L514 565 L511 559 L510 553 L507 547 L496 540 L500 531 L499 524 L498 520 L494 523 L483 529 L486 541 L478 546 L469 545 L460 539 L463 531 L468 523 L463 515 L459 507 L457 500 L456 495 L456 493 L455 494 L453 500 L451 508 L445 515 L446 524 L449 533 L442 541 L431 540 L424 537 L424 531 L422 526 L413 524 L404 519 L402 511 L400 505 L402 498 L408 490 L406 483 L400 477 L397 470 L391 465 L387 460 L391 451 L394 442 L391 436 L390 430 L387 424 L380 418 L379 411 L385 405 L389 399 L391 392 L396 387 L395 381 L388 372 L387 365 L391 358 L393 352 L400 347 L408 342 L406 335 L402 326 L403 320 L403 312 L405 305 L415 301 L420 295 L419 288 L420 281 L418 274 L414 265 L418 259 L426 255 L430 250 L434 245 L439 241 L438 233 L435 224 L437 219 L443 214 L445 209 L451 203 L457 198 L454 191 L450 183 L450 176 L451 169 L453 163 L459 159 L466 155 L468 149 L467 142 L469 136 L470 129 L471 122 L476 118 L483 116 L488 113 L492 109 L497 105 L500 100 L503 94 L507 89 L514 87 L520 85 L525 82 L531 81 L537 79 L541 74 L545 68 L551 65 L557 63 L562 60 L569 61 L576 62 L581 59 L586 55 L592 53 L597 50 L602 47 L608 46 L615 49 L621 50 L627 49 L634 48Z" fill="#c9744b"/><path d="M600 440 L720 440 L716 532 L665 632 L600 560Z" fill="#fde0c6"/><path d="M600 558 L665 632 L716 530 C760 528 800 532 830 545 C860 560 872 590 876 640 L871 810 L867 896 L893 1042 L495 1042 C496 1010 500 985 512 957 C530 910 552 850 572 800 C550 780 538 750 540 720 C545 700 555 685 566 670 C540 655 520 645 500 640 L270 726 C230 738 190 740 160 736 C140 670 130 590 130 522 C170 510 215 504 256 504 L264 590 L500 526 C540 528 575 540 600 558Z" fill="#dc3020"/><path d="M499 976 C600 990 740 988 832 976 L832 1042 L495 1042Z" fill="#35312f"/><path d="M545 200 C590 160 680 165 725 215 C752 250 760 320 752 380 C744 430 700 475 655 485 C610 478 565 420 548 350 C535 300 530 240 545 200Z" fill="#fde0c6"/><path d="M528 250 C520 220 530 190 560 170 C600 152 650 156 690 190 C700 215 705 235 720 250 C700 248 680 240 668 222 C660 235 650 240 636 232 C624 220 626 200 640 186 C610 178 570 190 545 222 C538 232 532 242 528 250Z" fill="#c9744b"/><path d="M532 250 L533 252 L534 256 L534 261 L535 267 L537 274 L533 282 L534 289 L538 296 L539 303 L542 310 L543 316 L543 322 L543 329 L546 335 L547 341 L550 347 L554 353 L556 359 L557 366 L560 372 L562 378 L564 384 L568 389 L573 393 L576 399 L579 405 L582 410 L584 416 L587 422 L591 426 L595 430 L600 435 L605 440 L609 444 L612 450 L615 455 L619 460 L622 464 L625 470 L627 475 L628 481 L627 487 L625 493 L624 500 L622 506 L621 512 L623 519 L624 525 L622 530 L620 537 L618 544 L614 551 L610 556 L614 564 L615 569 L612 574 L606 582 L597 581 L593 571 L592 570 L586 565 L583 559 L579 552 L576 545 L575 540 L572 538 L568 540 L565 545 L562 553 L562 563 L560 572 L553 575 L546 578 L540 577 L535 573 L529 575 L522 577 L516 575 L511 570 L506 564 L507 555 L510 548 L506 543 L501 538 L498 531 L493 523 L495 515 L500 509 L502 504 L500 498 L500 492 L497 486 L491 479 L492 473 L497 466 L499 460 L501 455 L505 449 L504 443 L499 436 L498 429 L501 424 L503 418 L507 412 L513 407 L513 400 L509 394 L507 388 L506 382 L503 376 L505 370 L511 364 L513 358 L511 352 L510 346 L508 340 L503 333 L504 326 L510 321 L514 315 L515 308 L517 302 L517 296 L514 290 L515 284 L519 277 L523 268 L525 260 L528 254 L530 250Z" fill="#c9744b"/></g><path d="M585 100 C620 88 665 92 700 122 C676 118 655 118 642 126 C612 120 590 130 568 152 C568 130 574 112 585 100Z" fill="#a65c39"/><path d="M483 240 L465 267 L483 294 L465 321 L483 348 L465 375 L483 402 L465 429 L483 456 L465 483 L483 510" stroke="#a65c39" stroke-width="22" fill="none" stroke-linecap="round" stroke-linejoin="round"/><path d="M532 320 L516 347 L532 374 L516 401 L532 428 L516 455 L532 482 L516 509 L532 536" stroke="#a65c39" stroke-width="20" fill="none" stroke-linecap="round" stroke-linejoin="round"/><path d="M573 420 L559 447 L573 474 L559 501 L573 528 L559 555" stroke="#a65c39" stroke-width="15" fill="none" stroke-linecap="round" stroke-linejoin="round"/><path d="M815 200 L797 227 L815 254 L797 281 L815 308 L797 335 L815 362 L797 389 L815 416 L797 443 L815 470" stroke="#a65c39" stroke-width="22" fill="none" stroke-linecap="round" stroke-linejoin="round"/><path d="M864 290 L848 317 L864 344 L848 371 L864 398 L848 425 L864 452" stroke="#a65c39" stroke-width="18" fill="none" stroke-linecap="round" stroke-linejoin="round"/><path d="M769 420 L755 446 L769 472" stroke="#a65c39" stroke-width="15" fill="none" stroke-linecap="round" stroke-linejoin="round"/><path d="M439 330 L425 356 L439 382 L425 408 L439 434 L425 460 L439 486" stroke="#a65c39" stroke-width="14" fill="none" stroke-linecap="round" stroke-linejoin="round"/><ellipse cx="574" cy="298" rx="27" ry="19" fill="#fff" stroke="#2a1812" stroke-width="2.500"/><circle cx="574" cy="299" r="15" fill="#7fb832"/><circle cx="574" cy="299" r="6" fill="#1c2a10"/><ellipse cx="694" cy="282" rx="27" ry="19" fill="#fff" stroke="#2a1812" stroke-width="2.500"/><circle cx="694" cy="283" r="15" fill="#7fb832"/><circle cx="694" cy="283" r="6" fill="#1c2a10"/><path d="M544 292 C556 274 590 272 604 290 M664 276 C678 258 712 258 724 274 M546 286 L532 272 M722 270 L740 258" stroke="#2a1812" stroke-width="4" fill="none"/><path d="M536 250 C555 232 585 230 604 244 M660 236 C680 218 712 218 730 234" stroke="#8a4a2c" stroke-width="6" fill="none" stroke-linecap="round"/><path d="M640 340 C646 350 642 358 632 360" stroke="#d9a98a" stroke-width="2.500" fill="none"/><path d="M606 398 C630 388 665 384 690 390 C686 425 660 445 632 436 C618 428 610 414 606 398Z" fill="#7a1f2c" stroke="#2a1812" stroke-width="2"/><path d="M614 400 C636 392 664 390 684 394 C680 406 670 412 660 414 C640 416 624 412 614 400Z" fill="#fff"/><path d="M606 398 C622 384 640 384 650 390 C662 382 680 382 690 390" stroke="#c8677a" stroke-width="6" fill="none"/><path d="M612 600 L656 712 M712 590 L664 712" stroke="#b8281c" stroke-width="2.500" fill="none"/><circle cx="660" cy="743" r="31" fill="#0c0808"/><circle cx="660" cy="735" r="14" fill="#dc3020"/><path d="M566 670 C546 690 538 730 552 770 C566 790 590 796 600 792 M770 640 C800 700 790 760 740 792 C730 796 720 794 716 790 M770 640 C766 620 768 600 772 585 M262 590 C266 640 268 690 264 728 M740 792 C775 860 808 930 834 1000" stroke="#8f1c12" stroke-width="2.500" fill="none"/><path d="M502 994 C600 1004 720 1002 830 992 L830 1012 C720 1022 600 1026 520 1030 C506 1022 502 1008 502 994Z" fill="#dc3020"/><rect x="608" y="999" width="112" height="27" fill="#9b9492" stroke="#5c5654" stroke-width="2"/></g></defs></svg>
<svg style="left:0;top:0" width="1920" height="1080"><use href="#chL" transform="translate(0 0) scale(1) translate(520 470) scale(0.240741)"/></svg>
<svg style="left:0;top:0" width="1920" height="1080"><use href="#chR" transform="translate(0 0) scale(1) translate(1410 645) scale(0.240741)"/></svg>
<div class="a" style="left:48px;top:316.500px;width:224px;height:128px;background:#fff;border:1px solid #d2d0ce;box-sizing:border-box"></div>
<div class="a" style="left:50px;top:318.500px;width:220px;height:124px;background:radial-gradient(ellipse 75% 110% at 45% 58%, #ebe9e6 0%, #e4e2df 40%, #d8d6d2 66%, #cecbc6 80%, #c5c3bd 91%, #bebcb5 100%)"></div>
<svg style="left:50px;top:429.3px;overflow:hidden" width="220" height="13.2" viewBox="0 0 220 13.2"><rect width="220" height="13.2" fill="#8f7040"/><rect x="0.0" y="0" width="5.7" height="13.2" fill="#977340"/><rect x="5.7" y="0" width="5.2" height="13.2" fill="#977340"/><rect x="11.0" y="0" width="6.4" height="13.2" fill="#977340"/><rect x="17.3" y="0" width="5.8" height="13.2" fill="#75572b"/><rect x="23.2" y="0" width="4.6" height="13.2" fill="#a9854d"/><rect x="27.7" y="0" width="6.1" height="13.2" fill="#a07c45"/><rect x="33.8" y="0" width="5.8" height="13.2" fill="#a07c45"/><rect x="39.6" y="0" width="4.7" height="13.2" fill="#a9854d"/><rect x="44.3" y="0" width="6.2" height="13.2" fill="#a9854d"/><rect x="50.5" y="0" width="5.6" height="13.2" fill="#75572b"/><rect x="56.1" y="0" width="5.0" height="13.2" fill="#977340"/><rect x="61.1" y="0" width="4.9" height="13.2" fill="#7f5f30"/><rect x="66.0" y="0" width="4.9" height="13.2" fill="#a9854d"/><rect x="70.9" y="0" width="4.8" height="13.2" fill="#8f6c38"/><rect x="75.7" y="0" width="4.8" height="13.2" fill="#75572b"/><rect x="80.5" y="0" width="5.4" height="13.2" fill="#a07c45"/><rect x="85.9" y="0" width="4.5" height="13.2" fill="#8f6c38"/><rect x="90.4" y="0" width="4.9" height="13.2" fill="#a07c45"/><rect x="95.3" y="0" width="6.4" height="13.2" fill="#a07c45"/><rect x="101.7" y="0" width="6.2" height="13.2" fill="#7f5f30"/><rect x="108.0" y="0" width="5.1" height="13.2" fill="#a07c45"/><rect x="113.1" y="0" width="5.6" height="13.2" fill="#977340"/><rect x="118.7" y="0" width="5.8" height="13.2" fill="#a07c45"/><rect x="124.4" y="0" width="6.4" height="13.2" fill="#977340"/><rect x="130.8" y="0" width="4.9" height="13.2" fill="#a9854d"/><rect x="135.7" y="0" width="5.1" height="13.2" fill="#7f5f30"/><rect x="140.8" y="0" width="5.3" height="13.2" fill="#a07c45"/><rect x="146.1" y="0" width="5.0" height="13.2" fill="#7f5f30"/><rect x="151.2" y="0" width="5.1" height="13.2" fill="#75572b"/><rect x="156.3" y="0" width="5.7" height="13.2" fill="#75572b"/><rect x="161.9" y="0" width="5.9" height="13.2" fill="#7f5f30"/><rect x="167.8" y="0" width="4.6" height="13.2" fill="#7f5f30"/><rect x="172.4" y="0" width="6.1" height="13.2" fill="#a9854d"/><rect x="178.6" y="0" width="5.9" height="13.2" fill="#a07c45"/><rect x="184.5" y="0" width="5.5" height="13.2" fill="#977340"/><rect x="189.9" y="0" width="4.9" height="13.2" fill="#7f5f30"/><rect x="194.8" y="0" width="6.5" height="13.2" fill="#8f6c38"/><rect x="201.2" y="0" width="6.4" height="13.2" fill="#7f5f30"/><rect x="207.6" y="0" width="6.2" height="13.2" fill="#8f6c38"/><rect x="213.8" y="0" width="5.6" height="13.2" fill="#a9854d"/><rect x="219.4" y="0" width="5.2" height="13.2" fill="#75572b"/><rect width="220" height="1.200" fill="#3c2c18" fill-opacity=".7"/></svg>
<span class="t" style="left:95.50px;top:346.5px;line-height:16px;font-size:13.5px;color:#111;transform:scaleX(1.0795);-webkit-text-stroke:0.2px #111;">AGUA OXIGENADA</span>
<span class="t" style="left:94.38px;top:361.5px;line-height:16px;font-size:13.5px;color:#111;transform:scaleX(1.2250);">H</span>
<span class="t" style="left:107.20px;top:367.7px;line-height:8px;font-size:7px;color:#111;transform:scaleX(0.8750);">2</span>
<span class="t" style="left:112.00px;top:361.5px;line-height:16px;font-size:13.5px;color:#111;transform:scaleX(0.9300);">O</span>
<span class="t" style="left:121.70px;top:367.7px;line-height:8px;font-size:7px;color:#111;transform:scaleX(0.8250);">2</span>
<div class="a" style="left:94.500px;top:381.500px;width:156px;height:1px;background:#b71c46"></div>
<span class="t" style="left:95.50px;top:383.8px;line-height:5px;font-size:3.8px;color:#222;font-weight:700;transform:scaleX(1.0304);">COLORACIÓN</span>
<div class="a" style="left:45px;top:463.500px;width:230px;height:133.500px;background:#f4694f"></div>
<div class="a" style="left:48.500px;top:466.500px;width:223px;height:126.800px;background:#fff"></div>
<div class="a" style="left:50px;top:468px;width:220px;height:123.800px;background:radial-gradient(ellipse 75% 110% at 45% 58%, #ebe9e6 0%, #e4e2df 40%, #d8d6d2 66%, #cecbc6 80%, #c5c3bd 91%, #bebcb5 100%)"></div>
<svg style="left:50px;top:578.7px;overflow:hidden" width="220" height="13.1" viewBox="0 0 220 13.1"><rect width="220" height="13.1" fill="#8f7040"/><rect x="0.0" y="0" width="5.7" height="13.1" fill="#977340"/><rect x="5.7" y="0" width="5.2" height="13.1" fill="#977340"/><rect x="11.0" y="0" width="6.4" height="13.1" fill="#977340"/><rect x="17.3" y="0" width="5.8" height="13.1" fill="#75572b"/><rect x="23.2" y="0" width="4.6" height="13.1" fill="#a9854d"/><rect x="27.7" y="0" width="6.1" height="13.1" fill="#a07c45"/><rect x="33.8" y="0" width="5.8" height="13.1" fill="#a07c45"/><rect x="39.6" y="0" width="4.7" height="13.1" fill="#a9854d"/><rect x="44.3" y="0" width="6.2" height="13.1" fill="#a9854d"/><rect x="50.5" y="0" width="5.6" height="13.1" fill="#75572b"/><rect x="56.1" y="0" width="5.0" height="13.1" fill="#977340"/><rect x="61.1" y="0" width="4.9" height="13.1" fill="#7f5f30"/><rect x="66.0" y="0" width="4.9" height="13.1" fill="#a9854d"/><rect x="70.9" y="0" width="4.8" height="13.1" fill="#8f6c38"/><rect x="75.7" y="0" width="4.8" height="13.1" fill="#75572b"/><rect x="80.5" y="0" width="5.4" height="13.1" fill="#a07c45"/><rect x="85.9" y="0" width="4.5" height="13.1" fill="#8f6c38"/><rect x="90.4" y="0" width="4.9" height="13.1" fill="#a07c45"/><rect x="95.3" y="0" width="6.4" height="13.1" fill="#a07c45"/><rect x="101.7" y="0" width="6.2" height="13.1" fill="#7f5f30"/><rect x="108.0" y="0" width="5.1" height="13.1" fill="#a07c45"/><rect x="113.1" y="0" width="5.6" height="13.1" fill="#977340"/><rect x="118.7" y="0" width="5.8" height="13.1" fill="#a07c45"/><rect x="124.4" y="0" width="6.4" height="13.1" fill="#977340"/><rect x="130.8" y="0" width="4.9" height="13.1" fill="#a9854d"/><rect x="135.7" y="0" width="5.1" height="13.1" fill="#7f5f30"/><rect x="140.8" y="0" width="5.3" height="13.1" fill="#a07c45"/><rect x="146.1" y="0" width="5.0" height="13.1" fill="#7f5f30"/><rect x="151.2" y="0" width="5.1" height="13.1" fill="#75572b"/><rect x="156.3" y="0" width="5.7" height="13.1" fill="#75572b"/><rect x="161.9" y="0" width="5.9" height="13.1" fill="#7f5f30"/><rect x="167.8" y="0" width="4.6" height="13.1" fill="#7f5f30"/><rect x="172.4" y="0" width="6.1" height="13.1" fill="#a9854d"/><rect x="178.6" y="0" width="5.9" height="13.1" fill="#a07c45"/><rect x="184.5" y="0" width="5.5" height="13.1" fill="#977340"/><rect x="189.9" y="0" width="4.9" height="13.1" fill="#7f5f30"/><rect x="194.8" y="0" width="6.5" height="13.1" fill="#8f6c38"/><rect x="201.2" y="0" width="6.4" height="13.1" fill="#7f5f30"/><rect x="207.6" y="0" width="6.2" height="13.1" fill="#8f6c38"/><rect x="213.8" y="0" width="5.6" height="13.1" fill="#a9854d"/><rect x="219.4" y="0" width="5.2" height="13.1" fill="#75572b"/><rect width="220" height="1.200" fill="#3c2c18" fill-opacity=".7"/></svg>
<span class="t" style="left:114.00px;top:482px;line-height:9px;font-size:7px;color:#111;transform:scaleX(0.9911);-webkit-text-stroke:0.3px #111;">CANTIDAD DE TINTE Y DE H</span>
<span class="t" style="left:208.30px;top:486.1px;line-height:5px;font-size:3.8px;color:#111;font-weight:700;transform:scaleX(0.9500);">2</span>
<span class="t" style="left:210.50px;top:482px;line-height:9px;font-size:7px;color:#111;transform:scaleX(0.9167);-webkit-text-stroke:0.3px #111;">O</span>
<span class="t" style="left:216.40px;top:486.1px;line-height:5px;font-size:3.8px;color:#111;font-weight:700;transform:scaleX(0.9500);">2</span>
<div class="a" style="left:80.216px;top:501.356px;width:130.37px;height:1px;background:#b71c46"></div>
<div class="a" style="left:99.5679px;top:506.364px;width:107.793px;height:51.6898px;background:#000"></div>
<span class="t" style="left:101.60px;top:507.08px;line-height:4px;font-size:3px;color:#555;transform:scaleX(0.9021);">Privacy &amp; Terms</span>
<svg style="left:0;top:0" width="1920" height="1080"><path d="M58.4 475.7 H97.3 Q99.3 475.7 99.3 477.7 V488.4 Q99.3 490.4 97.3 490.4 H78.9 L77.3 494.1 L76.1 490.4 H58.4 Q56.4 490.4 56.4 488.4 V477.7 Q56.4 475.7 58.4 475.7Z" fill="#fff" stroke="#777" stroke-width=".700"/></svg>
<svg style="left:0;top:0" width="1920" height="1080"><path d="M212.5 501.2 H257.7 Q259.7 501.2 259.7 503.2 V516.2 Q259.7 518.2 257.7 518.2 H236.3 L234.5 522.7 L233.2 518.2 H212.5 Q210.5 518.2 210.5 516.2 V503.2 Q210.5 501.2 212.5 501.2Z" fill="#fff" stroke="#777" stroke-width=".700"/></svg>
<span class="t" style="left:67.74px;top:480.684px;line-height:4px;font-size:3.3px;color:#222;font-weight:700;transform:scaleX(1.0336);">Hola chic@s</span>
<span class="t" style="left:216.19px;top:507.42px;line-height:4px;font-size:3.3px;color:#222;font-weight:700;transform:scaleX(1.1859);">Hasta la próxima!!!!!</span>
<svg style="left:0;top:0" width="1920" height="1080"><use href="#chL" transform="translate(-29.784 417.414) scale(0.169753) translate(520 470) scale(0.240741)"/></svg>
<svg style="left:0;top:0" width="1920" height="1080"><use href="#chR" transform="translate(-29.784 417.414) scale(0.169753) translate(1410 645) scale(0.240741)"/></svg>

</body></html>
